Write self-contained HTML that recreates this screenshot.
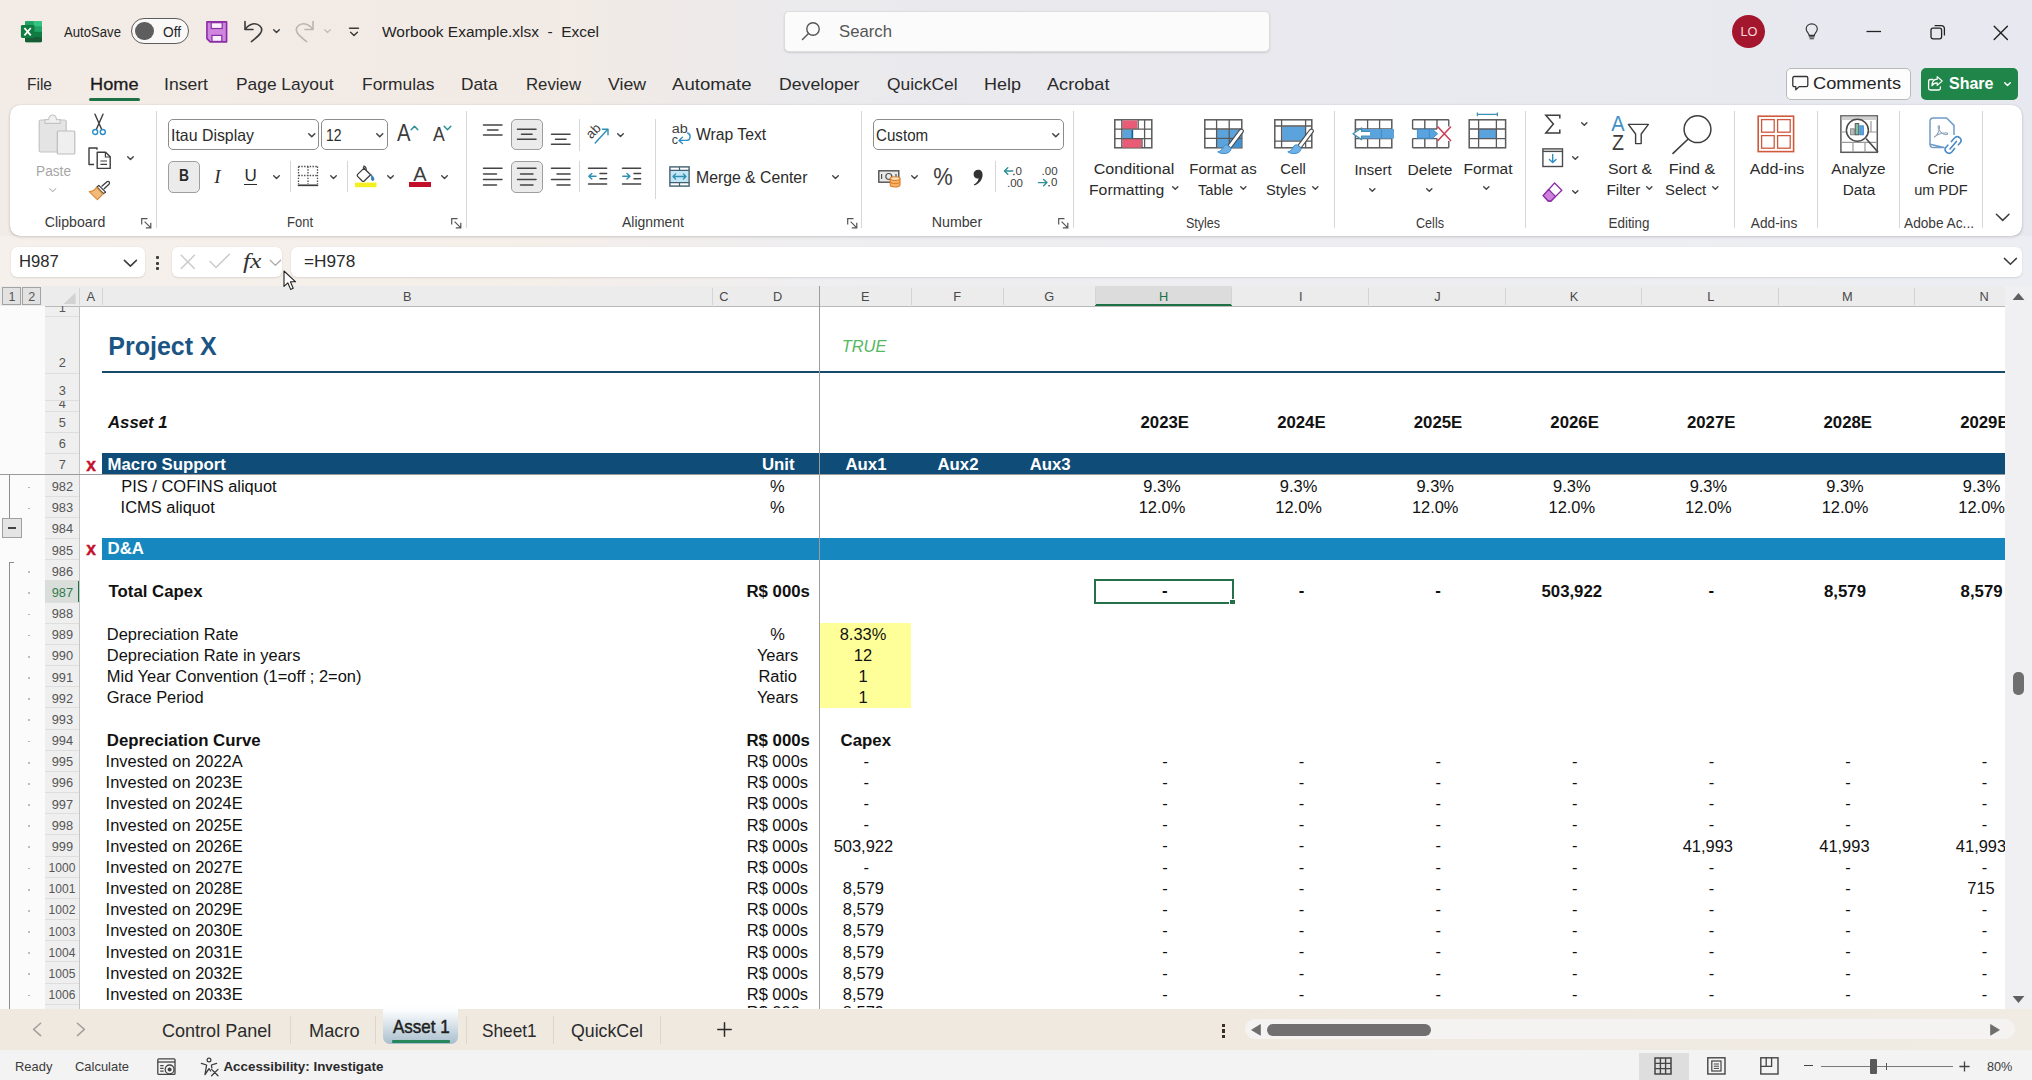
<!DOCTYPE html>
<html lang="en"><head><meta charset="utf-8"><title>Worbook Example.xlsx - Excel</title>
<style>
html,body{margin:0;padding:0}
body{width:2032px;height:1080px;position:relative;overflow:hidden;background:#f0ece8;font-family:"Liberation Sans", sans-serif;}
.a{position:absolute;box-sizing:border-box;display:block}
.t{position:absolute;white-space:nowrap;display:block}
svg{overflow:visible}
</style></head>
<body>
<div class="a" style="left:0px;top:0px;width:2032px;height:286px;background:linear-gradient(90deg,#f3ece6 0%,#f2ebe5 27%,#efeae8 33%,#ebeaec 39%,#e9e9ee 50%,#e8e9f0 100%);"></div>
<svg class="a" style="left:20px;top:21px;" width="23" height="22" viewBox="0 0 23 22"><rect x="5" y="0.2" width="17" height="21" rx="1.6" fill="#21a366"/>
<rect x="13.5" y="0.2" width="8.5" height="5.4" fill="#33c481"/><rect x="5" y="0.2" width="8.5" height="5.4" fill="#21a366"/>
<rect x="5" y="5.6" width="8.5" height="5.2" fill="#107c41"/><rect x="13.5" y="5.6" width="8.5" height="5.2" fill="#21a366"/>
<rect x="5" y="10.8" width="8.5" height="5.2" fill="#185c37"/><rect x="13.5" y="10.8" width="8.5" height="5.2" fill="#107c41"/>
<rect x="5" y="16" width="17" height="5.2" rx="1.2" fill="#185c37"/>
<rect x="0.9" y="4" width="13.6" height="13" rx="1.4" fill="#107c41"/>
<path d="M4.4 7 L10.8 14.4 M10.8 7 L4.4 14.4" stroke="#fff" stroke-width="1.8" stroke-linecap="butt"/></svg>
<span class="t" style="left:64.4px;top:23.00px;height:18px;line-height:18px;font-size:14px;color:#242424;transform-origin:left center;transform:scaleX(0.9388);">AutoSave</span>
<div class="a" style="left:131.3px;top:18px;width:57.5px;height:26.4px;background:#fbf9f8;border:1.5px solid #5c5c5c;border-radius:14px;"></div>
<div class="a" style="left:135.4px;top:22.1px;width:18.2px;height:18.2px;background:#5e5e5e;border-radius:10px;"></div>
<span class="t" style="left:162.7px;top:23.00px;height:18px;line-height:18px;font-size:14px;color:#242424;transform-origin:left center;transform:scaleX(0.9771);">Off</span>
<svg class="a" style="left:205.6px;top:20.8px;" width="22" height="22" viewBox="0 0 22 22"><path d="M0.9 0.9 H20.6 V20.9 H4.2 L0.9 17.6 Z" fill="#cf86de" stroke="#8a2da5" stroke-width="1.6" stroke-linejoin="round"/>
<rect x="5.2" y="1.7" width="11" height="5.8" fill="#fbf0fd" stroke="#8a2da5" stroke-width="1.2"/>
<rect x="6" y="14.4" width="9.8" height="6" fill="#fbf0fd" stroke="#8a2da5" stroke-width="1.2"/></svg>
<svg class="a" style="left:242px;top:19px;" width="23" height="24" viewBox="0 0 23 24"><path d="M3 2.5 V10.5 H11" fill="none" stroke="#3b3b3b" stroke-width="1.6" stroke-linecap="round" stroke-linejoin="round"/>
<path d="M3.4 10.2 C7 4.5 14 3 18 7 C22.4 11.5 18 16 9.4 22.6" fill="none" stroke="#3b3b3b" stroke-width="1.6" stroke-linecap="round"/></svg>
<svg class="a" style="left:271.9px;top:28.299999999999997px;" width="9" height="6.2" viewBox="0 0 9 6.2"><path d="M1.70 1.70 L4.50 4.50 L7.30 1.70" fill="none" stroke="#3b3b3b" stroke-width="1.4" stroke-linecap="round" stroke-linejoin="round"/></svg>
<svg class="a" style="left:293px;top:19px;" width="23" height="24" viewBox="0 0 23 24"><path d="M20 2.5 V10.5 H12" fill="none" stroke="#b9b5b2" stroke-width="1.6" stroke-linecap="round" stroke-linejoin="round"/>
<path d="M19.6 10.2 C16 4.5 9 3 5 7 C0.6 11.5 5 16 13.6 22.6" fill="none" stroke="#b9b5b2" stroke-width="1.6" stroke-linecap="round"/></svg>
<svg class="a" style="left:322.9px;top:28.299999999999997px;" width="9" height="6.2" viewBox="0 0 9 6.2"><path d="M1.70 1.70 L4.50 4.50 L7.30 1.70" fill="none" stroke="#c4c0bd" stroke-width="1.4" stroke-linecap="round" stroke-linejoin="round"/></svg>
<svg class="a" style="left:348px;top:26px;" width="12" height="12" viewBox="0 0 12 12"><path d="M1.5 2.2 H10.5" stroke="#3b3b3b" stroke-width="1.4" stroke-linecap="round"/><path d="M2.6 6.2 L6 9.6 L9.4 6.2" fill="none" stroke="#3b3b3b" stroke-width="1.4" stroke-linecap="round" stroke-linejoin="round"/></svg>
<span class="t" style="left:381.5px;top:22.20px;height:20px;line-height:20px;font-size:15.3px;color:#242424;transform-origin:left center;transform:scaleX(1.0103);white-space:pre;">Worbook Example.xlsx  -  Excel</span>
<div class="a" style="left:783.5px;top:10.9px;width:486px;height:41.6px;background:#fbfbfb;border:1px solid #dedddd;border-radius:5px;box-shadow:0 1px 2px rgba(0,0,0,.13);"></div>
<svg class="a" style="left:801px;top:21px;" width="20" height="20" viewBox="0 0 20 20"><circle cx="12" cy="8" r="6.2" fill="none" stroke="#555" stroke-width="1.4"/><path d="M7.5 12.5 L1.5 18.5" stroke="#555" stroke-width="1.5" stroke-linecap="round"/></svg>
<span class="t" style="left:838.5px;top:20.50px;height:22px;line-height:22px;font-size:17px;color:#555;transform-origin:left center;transform:scaleX(0.9838);">Search</span>
<div class="a" style="left:1732px;top:15.1px;width:33px;height:33px;background:#a4152e;border-radius:17px;"></div>
<span class="t" style="left:1748.5px;top:23.30px;height:17px;line-height:17px;font-size:13px;color:#f6dada;transform-origin:center center;transform:translateX(-50%) scaleX(0.9802);">LO</span>
<svg class="a" style="left:1804.5px;top:22.5px;" width="13.5" height="17" viewBox="0 0 15 19"><path d="M7.5 1 C3.8 1 1.3 3.6 1.3 6.8 C1.3 9 2.6 10.4 3.6 11.6 C4.2 12.3 4.5 13 4.5 13.8 H10.5 C10.5 13 10.8 12.3 11.4 11.6 C12.4 10.4 13.7 9 13.7 6.8 C13.7 3.6 11.2 1 7.5 1 Z" fill="none" stroke="#333" stroke-width="1.3"/><path d="M4.8 15.5 H10.2 M5.6 17.6 H9.4" stroke="#333" stroke-width="1.3" stroke-linecap="round"/></svg>
<svg class="a" style="left:1866px;top:30px;" width="16" height="3" viewBox="0 0 16 3"><path d="M0.5 1.5 H15" stroke="#222" stroke-width="1.3"/></svg>
<svg class="a" style="left:1930px;top:24px;" width="16" height="16" viewBox="0 0 16 16"><rect x="1" y="4.2" width="10.6" height="10.6" rx="2" fill="none" stroke="#222" stroke-width="1.3"/><path d="M4.6 1.6 H11.2 Q14.4 1.6 14.4 4.8 V11.4" fill="none" stroke="#222" stroke-width="1.3"/></svg>
<svg class="a" style="left:1993px;top:24.5px;" width="16" height="16" viewBox="0 0 16 16"><path d="M1.2 1.2 L14.4 14.4 M14.4 1.2 L1.2 14.4" stroke="#222" stroke-width="1.4" stroke-linecap="round"/></svg>
<span class="t" style="left:27px;top:73.90px;height:22px;line-height:22px;font-size:17px;color:#2a2a2a;transform-origin:left center;transform:scaleX(0.9122);">File</span>
<span class="t" style="left:89.5px;top:73.90px;height:22px;line-height:22px;font-size:17px;color:#1b1b1b;transform-origin:left center;transform:scaleX(1.0692);-webkit-text-stroke:0.3px #1b1b1b;">Home</span>
<span class="t" style="left:164px;top:73.90px;height:22px;line-height:22px;font-size:17px;color:#2a2a2a;transform-origin:left center;transform:scaleX(1.0345);">Insert</span>
<span class="t" style="left:236px;top:73.90px;height:22px;line-height:22px;font-size:17px;color:#2a2a2a;transform-origin:left center;transform:scaleX(1.0213);">Page Layout</span>
<span class="t" style="left:362px;top:73.90px;height:22px;line-height:22px;font-size:17px;color:#2a2a2a;transform-origin:left center;transform:scaleX(1.0232);">Formulas</span>
<span class="t" style="left:460.5px;top:73.90px;height:22px;line-height:22px;font-size:17px;color:#2a2a2a;transform-origin:left center;transform:scaleX(1.0161);">Data</span>
<span class="t" style="left:526px;top:73.90px;height:22px;line-height:22px;font-size:17px;color:#2a2a2a;transform-origin:left center;transform:scaleX(0.9865);">Review</span>
<span class="t" style="left:608px;top:73.90px;height:22px;line-height:22px;font-size:17px;color:#2a2a2a;transform-origin:left center;transform:scaleX(1.0398);">View</span>
<span class="t" style="left:672px;top:73.90px;height:22px;line-height:22px;font-size:17px;color:#2a2a2a;transform-origin:left center;transform:scaleX(1.0925);">Automate</span>
<span class="t" style="left:779px;top:73.90px;height:22px;line-height:22px;font-size:17px;color:#2a2a2a;transform-origin:left center;transform:scaleX(1.0387);">Developer</span>
<span class="t" style="left:887px;top:73.90px;height:22px;line-height:22px;font-size:17px;color:#2a2a2a;transform-origin:left center;transform:scaleX(1.0222);">QuickCel</span>
<span class="t" style="left:984px;top:73.90px;height:22px;line-height:22px;font-size:17px;color:#2a2a2a;transform-origin:left center;transform:scaleX(1.0581);">Help</span>
<span class="t" style="left:1047px;top:73.90px;height:22px;line-height:22px;font-size:17px;color:#2a2a2a;transform-origin:left center;transform:scaleX(1.0667);">Acrobat</span>
<div class="a" style="left:88.6px;top:97.6px;width:51.4px;height:3.2px;background:#1e7145;border-radius:2px;"></div>
<div class="a" style="left:1786px;top:68px;width:125px;height:31.5px;background:#fdfdfd;border:1px solid #b9b9b9;border-radius:5px;"></div>
<svg class="a" style="left:1792px;top:75px;" width="17" height="17" viewBox="0 0 17 17"><path d="M2.2 1.5 H14.4 Q15.8 1.5 15.8 2.9 V10.2 Q15.8 11.6 14.4 11.6 H7.2 L3.8 14.8 V11.6 H2.2 Q0.8 11.6 0.8 10.2 V2.9 Q0.8 1.5 2.2 1.5 Z" fill="none" stroke="#333" stroke-width="1.3" stroke-linejoin="round"/></svg>
<span class="t" style="left:1813px;top:73.30px;height:21px;line-height:21px;font-size:16.5px;color:#242424;transform-origin:left center;transform:scaleX(1.1030);">Comments</span>
<div class="a" style="left:1921px;top:68px;width:96.5px;height:31.5px;background:#1f8548;border-radius:5px;"></div>
<svg class="a" style="left:1927px;top:75px;" width="17" height="17" viewBox="0 0 17 17"><path d="M6 4.5 H3.4 Q1.6 4.5 1.6 6.3 V13.2 Q1.6 15 3.4 15 H11.6 Q13.4 15 13.4 13.2 V11.8" fill="none" stroke="#fff" stroke-width="1.3" stroke-linecap="round"/><path d="M10.2 1.6 L15.2 6 L10.2 10.4 V7.8 C7.6 7.8 6 8.8 5 10.8 C5 7 7 4.4 10.2 4.2 Z" fill="none" stroke="#fff" stroke-width="1.2" stroke-linejoin="round"/></svg>
<span class="t" style="left:1949px;top:73.30px;height:21px;line-height:21px;font-size:16.5px;color:#ffffff;font-weight:700;transform-origin:left center;transform:scaleX(0.9704);">Share</span>
<svg class="a" style="left:2003.0px;top:81.375px;" width="9" height="6.25" viewBox="0 0 9 6.25"><path d="M1.75 1.75 L4.50 4.50 L7.25 1.75" fill="none" stroke="#fff" stroke-width="1.5" stroke-linecap="round" stroke-linejoin="round"/></svg>
<div class="a" style="left:10px;top:105px;width:2012px;height:130.5px;background:#ffffff;border-radius:10px;box-shadow:0 1px 3px rgba(0,0,0,.22),0 0 1px rgba(0,0,0,.15);"></div>
<svg class="a" style="left:38px;top:114px;" width="38" height="41" viewBox="0 0 38 41"><rect x="1.2" y="6" width="27" height="32" rx="1.5" fill="#e4e4e4" stroke="#c4c4c4" stroke-width="1.2"/>
<path d="M7 9.4 V5.6 H10.6 Q11.2 1 14.6 1 Q18 1 18.6 5.6 H22.2 V9.4 Z" fill="#f0f0f0" stroke="#c4c4c4" stroke-width="1.1"/>
<rect x="19.3" y="17" width="17.5" height="23" rx="1" fill="#efefef" stroke="#bdbdbd" stroke-width="1.2"/></svg>
<span class="t" style="left:35.8px;top:160.60px;height:20px;line-height:20px;font-size:15.2px;color:#a6a6a6;transform-origin:left center;transform:scaleX(0.9010);">Paste</span>
<svg class="a" style="left:48.099999999999994px;top:186.54999999999998px;" width="9.4" height="6.3" viewBox="0 0 9.4 6.3"><path d="M1.60 1.60 L4.70 4.70 L7.80 1.60" fill="none" stroke="#bdbdbd" stroke-width="1.2" stroke-linecap="round" stroke-linejoin="round"/></svg>
<svg class="a" style="left:91px;top:113px;" width="16" height="23" viewBox="0 0 16 23"><path d="M4 1.2 L10.6 16.2 M12 1.2 L5.4 16.2" stroke="#3d3d3d" stroke-width="1.4" stroke-linecap="round"/>
<circle cx="4.2" cy="19" r="2.5" fill="none" stroke="#2f8fc4" stroke-width="1.4"/><circle cx="11.8" cy="19" r="2.5" fill="none" stroke="#2f8fc4" stroke-width="1.4"/></svg>
<svg class="a" style="left:87.5px;top:146.5px;" width="24" height="23" viewBox="0 0 24 23"><path d="M9 2.8 V1 H1 V17.5 H6" fill="none" stroke="#3d3d3d" stroke-width="1.4" stroke-linejoin="round"/>
<path d="M9.2 5.2 H17.6 L22.2 9.8 V21.4 H9.2 Z" fill="#fff" stroke="#3d3d3d" stroke-width="1.4" stroke-linejoin="round"/>
<path d="M17.4 5.4 V10 H22" fill="none" stroke="#3d3d3d" stroke-width="1.2"/>
<path d="M12.4 14 H19 M12.4 17.4 H19" stroke="#3d3d3d" stroke-width="1.2"/></svg>
<svg class="a" style="left:125.9px;top:155.1px;" width="9" height="6.2" viewBox="0 0 9 6.2"><path d="M1.70 1.70 L4.50 4.50 L7.30 1.70" fill="none" stroke="#444" stroke-width="1.4" stroke-linecap="round" stroke-linejoin="round"/></svg>
<svg class="a" style="left:88px;top:180px;" width="23" height="21" viewBox="0 0 23 21"><path d="M13.5 6.5 L19 1.8 Q20.3 0.9 21.2 2 Q22 3.2 21 4.2 L15.8 9" fill="#fff" stroke="#3d3d3d" stroke-width="1.3" stroke-linejoin="round"/>
<path d="M10.8 5.4 L17.6 12.2 L15.4 13.6 L9 7 Z" fill="#fff" stroke="#3d3d3d" stroke-width="1.2" stroke-linejoin="round"/>
<path d="M8.6 7.4 L14.8 14 L9.4 19.6 L1.2 11.6 C4.5 11.6 6.8 10 8.6 7.4 Z" fill="#f1bb7c" stroke="#d98a3a" stroke-width="1.2" stroke-linejoin="round"/></svg>
<span class="t" style="left:74.5px;top:213.30px;height:19px;line-height:19px;font-size:14.3px;color:#3a3a3a;transform-origin:center center;transform:translateX(-50%) scaleX(0.9885);">Clipboard</span>
<svg class="a" style="left:141px;top:217.5px;" width="11" height="11" viewBox="0 0 11 11"><path d="M0.7 6.5 V0.7 H6.5" fill="none" stroke="#555" stroke-width="1.2"/><path d="M3.6 3.6 L9.6 9.6 M9.8 4.8 V9.8 H4.8" fill="none" stroke="#555" stroke-width="1.2"/></svg>
<div class="a" style="left:156.1px;top:111px;width:1px;height:117px;background:#d6d6d6;"></div>
<div class="a" style="left:168px;top:118.7px;width:151px;height:31.5px;background:#fff;border:1px solid #8c8c8c;border-radius:5px;"></div>
<span class="t" style="left:171px;top:124.80px;height:21px;line-height:21px;font-size:16.5px;color:#2b2b2b;transform-origin:left center;transform:scaleX(0.9627);">Itau Display</span>
<svg class="a" style="left:306.75px;top:131.75px;" width="9.5" height="6.5" viewBox="0 0 9.5 6.5"><path d="M1.75 1.75 L4.75 4.75 L7.75 1.75" fill="none" stroke="#444" stroke-width="1.5" stroke-linecap="round" stroke-linejoin="round"/></svg>
<div class="a" style="left:321px;top:118.7px;width:66.5px;height:31.5px;background:#fff;border:1px solid #8c8c8c;border-radius:5px;"></div>
<span class="t" style="left:326px;top:124.80px;height:21px;line-height:21px;font-size:16.5px;color:#2b2b2b;transform-origin:left center;transform:scaleX(0.8443);">12</span>
<svg class="a" style="left:375.25px;top:131.75px;" width="9.5" height="6.5" viewBox="0 0 9.5 6.5"><path d="M1.75 1.75 L4.75 4.75 L7.75 1.75" fill="none" stroke="#444" stroke-width="1.5" stroke-linecap="round" stroke-linejoin="round"/></svg>
<span class="t" style="left:397px;top:120.50px;height:24px;line-height:24px;font-size:23px;color:#3d3d3d;transform-origin:left center;transform:scaleX(0.8798);">A</span>
<svg class="a" style="left:409.5px;top:124.5px;" width="9" height="6" viewBox="0 0 9 6"><path d="M1.2 4.8 L4.5 1.3 L7.8 4.8" fill="none" stroke="#2e8f95" stroke-width="1.5" stroke-linecap="round" stroke-linejoin="round"/></svg>
<span class="t" style="left:433px;top:122.80px;height:22px;line-height:22px;font-size:19.5px;color:#3d3d3d;transform-origin:left center;transform:scaleX(0.9066);">A</span>
<svg class="a" style="left:443.3px;top:124.5px;" width="9" height="6" viewBox="0 0 9 6"><path d="M1.2 1.2 L4.5 4.7 L7.8 1.2" fill="none" stroke="#2e8f95" stroke-width="1.5" stroke-linecap="round" stroke-linejoin="round"/></svg>
<div class="a" style="left:168px;top:161px;width:32px;height:31.5px;background:#ebebeb;border:1px solid #9e9e9e;border-radius:5px;"></div>
<span class="t" style="left:184px;top:164.90px;height:22px;line-height:22px;font-size:17px;color:#2b2b2b;font-weight:700;transform-origin:center center;transform:translateX(-50%) scaleX(0.8142);">B</span>
<span class="t" style="left:217.3px;top:163.70px;height:25px;line-height:25px;font-size:19px;color:#2b2b2b;font-style:italic;font-family:'Liberation Serif',serif;transform-origin:center center;transform:translateX(-50%);">I</span>
<span class="t" style="left:250.7px;top:165.00px;height:22px;line-height:22px;font-size:17px;color:#2b2b2b;transform-origin:center center;transform:translateX(-50%);">U</span>
<div class="a" style="left:244.3px;top:183.6px;width:13px;height:1.5px;background:#2b2b2b;"></div>
<svg class="a" style="left:272.0px;top:174.1px;" width="9" height="6.2" viewBox="0 0 9 6.2"><path d="M1.70 1.70 L4.50 4.50 L7.30 1.70" fill="none" stroke="#444" stroke-width="1.4" stroke-linecap="round" stroke-linejoin="round"/></svg>
<div class="a" style="left:290.1px;top:161px;width:1px;height:31px;background:#d6d6d6;"></div>
<svg class="a" style="left:297px;top:165px;" width="22" height="22" viewBox="0 0 22 22"><path d="M1.5 1.5 H20.5 M1.5 1.5 V19 M20.5 1.5 V19 M11 1.5 V19 M1.5 10.5 H20.5" fill="none" stroke="#4a4a4a" stroke-width="1.3" stroke-dasharray="1.4 1.4"/>
<path d="M0.8 20.3 H21.2" stroke="#3d3d3d" stroke-width="1.7"/></svg>
<svg class="a" style="left:329.0px;top:174.1px;" width="9" height="6.2" viewBox="0 0 9 6.2"><path d="M1.70 1.70 L4.50 4.50 L7.30 1.70" fill="none" stroke="#444" stroke-width="1.4" stroke-linecap="round" stroke-linejoin="round"/></svg>
<div class="a" style="left:346.6px;top:161px;width:1px;height:31px;background:#d6d6d6;"></div>
<svg class="a" style="left:355px;top:165px;" width="22" height="23" viewBox="0 0 22 23"><path d="M8 2.2 L15.6 9.8 L9.2 16 Q8.2 16.8 7.2 16 L2.6 11.4 Q1.8 10.4 2.6 9.4 L9.6 2.6" fill="#fff" stroke="#3d3d3d" stroke-width="1.3" stroke-linejoin="round"/>
<path d="M8.2 1.2 C10.5 1.2 11.4 3 11.2 5" fill="none" stroke="#3d3d3d" stroke-width="1.2"/>
<path d="M15.8 9.2 C17.6 10.6 19 12.6 19 14.4 C19 15.8 16.4 15.8 16.4 14.4 C16.4 13 16.6 11.4 15.8 9.2 Z" fill="#2c79b3" stroke="#2c79b3" stroke-width="0.6"/>
<rect x="0" y="17.6" width="21.5" height="4.6" fill="#f4f01f"/></svg>
<svg class="a" style="left:385.9px;top:174.1px;" width="9" height="6.2" viewBox="0 0 9 6.2"><path d="M1.70 1.70 L4.50 4.50 L7.30 1.70" fill="none" stroke="#444" stroke-width="1.4" stroke-linecap="round" stroke-linejoin="round"/></svg>
<span class="t" style="left:420.3px;top:163.30px;height:22px;line-height:22px;font-size:20.5px;color:#3d3d3d;transform-origin:center center;transform:translateX(-50%) scaleX(0.9790);">A</span>
<div class="a" style="left:409px;top:182.4px;width:22.2px;height:4.8px;background:#c40f2b;"></div>
<svg class="a" style="left:439.9px;top:174.1px;" width="9" height="6.2" viewBox="0 0 9 6.2"><path d="M1.70 1.70 L4.50 4.50 L7.30 1.70" fill="none" stroke="#444" stroke-width="1.4" stroke-linecap="round" stroke-linejoin="round"/></svg>
<span class="t" style="left:300px;top:213.30px;height:19px;line-height:19px;font-size:14.3px;color:#3a3a3a;transform-origin:center center;transform:translateX(-50%) scaleX(0.9088);">Font</span>
<svg class="a" style="left:450.5px;top:217.5px;" width="11" height="11" viewBox="0 0 11 11"><path d="M0.7 6.5 V0.7 H6.5" fill="none" stroke="#555" stroke-width="1.2"/><path d="M3.6 3.6 L9.6 9.6 M9.8 4.8 V9.8 H4.8" fill="none" stroke="#555" stroke-width="1.2"/></svg>
<div class="a" style="left:465.6px;top:111px;width:1px;height:117px;background:#d6d6d6;"></div>
<svg class="a" style="left:482px;top:119px;" width="22" height="30" viewBox="0 0 22 30"><path d="M1.5 6 H20" stroke="#444" stroke-width="1.5" stroke-linecap="round"/><path d="M5.5 11 H16" stroke="#444" stroke-width="1.5" stroke-linecap="round"/><path d="M1.5 16 H20" stroke="#444" stroke-width="1.5" stroke-linecap="round"/></svg>
<div class="a" style="left:511px;top:118.7px;width:32px;height:31.5px;background:#ebebeb;border:1px solid #9e9e9e;border-radius:5px;"></div>
<svg class="a" style="left:516px;top:119px;" width="22" height="30" viewBox="0 0 22 30"><path d="M1.5 10.2 H20" stroke="#444" stroke-width="1.5" stroke-linecap="round"/><path d="M5.5 15.2 H16" stroke="#444" stroke-width="1.5" stroke-linecap="round"/><path d="M1.5 20.2 H20" stroke="#444" stroke-width="1.5" stroke-linecap="round"/></svg>
<svg class="a" style="left:550px;top:119px;" width="22" height="30" viewBox="0 0 22 30"><path d="M1.5 15.2 H20" stroke="#444" stroke-width="1.5" stroke-linecap="round"/><path d="M5.5 20.2 H16" stroke="#444" stroke-width="1.5" stroke-linecap="round"/><path d="M1.5 25.2 H20" stroke="#444" stroke-width="1.5" stroke-linecap="round"/></svg>
<div class="a" style="left:578.6px;top:119px;width:1px;height:32px;background:#d6d6d6;"></div>
<svg class="a" style="left:586px;top:122px;" width="24" height="23" viewBox="0 0 24 23"><text x="0" y="0" font-family="Liberation Sans, sans-serif" font-size="13.4" fill="#3d3d3d" transform="translate(5.3,17.6) rotate(-46)">ab</text>
<path d="M9.2 21 L21.6 7.6" stroke="#2f8fb5" stroke-width="1.4" stroke-linecap="round"/><path d="M16.4 7.2 L22 7.2 L22 12.8" fill="none" stroke="#2f8fb5" stroke-width="1.4" stroke-linecap="round" stroke-linejoin="round"/></svg>
<svg class="a" style="left:616.0px;top:131.9px;" width="9" height="6.2" viewBox="0 0 9 6.2"><path d="M1.70 1.70 L4.50 4.50 L7.30 1.70" fill="none" stroke="#444" stroke-width="1.4" stroke-linecap="round" stroke-linejoin="round"/></svg>
<svg class="a" style="left:482px;top:165px;" width="22" height="23" viewBox="0 0 22 23"><path d="M1.5 3.2 H20" stroke="#444" stroke-width="1.5" stroke-linecap="round"/><path d="M1.5 8.9 H14.5" stroke="#444" stroke-width="1.5" stroke-linecap="round"/><path d="M1.5 14.5 H20" stroke="#444" stroke-width="1.5" stroke-linecap="round"/><path d="M1.5 20.1 H14.5" stroke="#444" stroke-width="1.5" stroke-linecap="round"/></svg>
<div class="a" style="left:511px;top:161px;width:32px;height:31.5px;background:#ebebeb;border:1px solid #9e9e9e;border-radius:5px;"></div>
<svg class="a" style="left:516px;top:165px;" width="22" height="23" viewBox="0 0 22 23"><path d="M1.5 3.2 H20" stroke="#444" stroke-width="1.5" stroke-linecap="round"/><path d="M4.5 8.9 H17" stroke="#444" stroke-width="1.5" stroke-linecap="round"/><path d="M1.5 14.5 H20" stroke="#444" stroke-width="1.5" stroke-linecap="round"/><path d="M4.5 20.1 H17" stroke="#444" stroke-width="1.5" stroke-linecap="round"/></svg>
<svg class="a" style="left:550px;top:165px;" width="22" height="23" viewBox="0 0 22 23"><path d="M1.5 3.2 H20" stroke="#444" stroke-width="1.5" stroke-linecap="round"/><path d="M7 8.9 H20" stroke="#444" stroke-width="1.5" stroke-linecap="round"/><path d="M1.5 14.5 H20" stroke="#444" stroke-width="1.5" stroke-linecap="round"/><path d="M7 20.1 H20" stroke="#444" stroke-width="1.5" stroke-linecap="round"/></svg>
<div class="a" style="left:578.6px;top:161px;width:1px;height:31px;background:#d6d6d6;"></div>
<svg class="a" style="left:587px;top:165px;" width="22" height="23" viewBox="0 0 22 23"><path d="M1.5 3.2 H19.6" stroke="#444" stroke-width="1.5" stroke-linecap="round"/><path d="M13 8.5 H19.6" stroke="#444" stroke-width="1.5" stroke-linecap="round"/><path d="M13 13.8 H19.6" stroke="#444" stroke-width="1.5" stroke-linecap="round"/><path d="M1.5 19.1 H19.6" stroke="#444" stroke-width="1.5" stroke-linecap="round"/><path d="M9 11.2 H2 M4.8 8.4 L1.8 11.2 L4.8 14" fill="none" stroke="#2f8fb5" stroke-width="1.4" stroke-linecap="round" stroke-linejoin="round"/></svg>
<svg class="a" style="left:621px;top:165px;" width="22" height="23" viewBox="0 0 22 23"><path d="M1.5 3.2 H19.6" stroke="#444" stroke-width="1.5" stroke-linecap="round"/><path d="M13 8.5 H19.6" stroke="#444" stroke-width="1.5" stroke-linecap="round"/><path d="M13 13.8 H19.6" stroke="#444" stroke-width="1.5" stroke-linecap="round"/><path d="M1.5 19.1 H19.6" stroke="#444" stroke-width="1.5" stroke-linecap="round"/><path d="M1.8 11.2 H8.8 M6 8.4 L9 11.2 L6 14" fill="none" stroke="#2f8fb5" stroke-width="1.4" stroke-linecap="round" stroke-linejoin="round"/></svg>
<div class="a" style="left:654.6px;top:119px;width:1px;height:80px;background:#d6d6d6;"></div>
<svg class="a" style="left:670px;top:124px;" width="22" height="22" viewBox="0 0 22 22"><text x="1.8" y="9.4" font-family="Liberation Sans, sans-serif" font-size="12.5" fill="#3d3d3d" textLength="16" lengthAdjust="spacingAndGlyphs">ab</text>
<text x="1.8" y="19.6" font-family="Liberation Sans, sans-serif" font-size="12.5" fill="#3d3d3d">c</text>
<path d="M17.6 9 C21.4 10 20.8 16.4 16.4 16.4 H9.4 M12.4 13.2 L9 16.4 L12.4 19.6" fill="none" stroke="#2f8fc4" stroke-width="1.4" stroke-linecap="round" stroke-linejoin="round"/></svg>
<span class="t" style="left:695.6px;top:125.20px;height:20px;line-height:20px;font-size:15.6px;color:#2b2b2b;transform-origin:left center;transform:scaleX(1.0083);">Wrap Text</span>
<svg class="a" style="left:668.5px;top:165.5px;" width="21" height="21" viewBox="0 0 21 21"><rect x="1.4" y="4.6" width="18.2" height="11.8" fill="#c3e6f6"/>
<rect x="0.9" y="0.9" width="19.2" height="19.2" fill="none" stroke="#44606f" stroke-width="1.4"/>
<path d="M0.9 4.4 H20.1 M0.9 16.6 H20.1 M10.5 0.9 V4.4 M10.5 16.6 V20.1" stroke="#44606f" stroke-width="1.2" fill="none"/>
<path d="M4.2 10.5 H16.8 M6.6 8 L4 10.5 L6.6 13 M14.4 8 L17 10.5 L14.4 13" fill="none" stroke="#2f8fb5" stroke-width="1.3" stroke-linecap="round" stroke-linejoin="round"/></svg>
<span class="t" style="left:695.6px;top:167.60px;height:20px;line-height:20px;font-size:15.6px;color:#2b2b2b;transform-origin:left center;transform:scaleX(1.0120);">Merge &amp; Center</span>
<svg class="a" style="left:831.0px;top:174.1px;" width="9" height="6.2" viewBox="0 0 9 6.2"><path d="M1.70 1.70 L4.50 4.50 L7.30 1.70" fill="none" stroke="#444" stroke-width="1.4" stroke-linecap="round" stroke-linejoin="round"/></svg>
<span class="t" style="left:652.5px;top:213.30px;height:19px;line-height:19px;font-size:14.3px;color:#3a3a3a;transform-origin:center center;transform:translateX(-50%) scaleX(0.9752);">Alignment</span>
<svg class="a" style="left:847px;top:217.5px;" width="11" height="11" viewBox="0 0 11 11"><path d="M0.7 6.5 V0.7 H6.5" fill="none" stroke="#555" stroke-width="1.2"/><path d="M3.6 3.6 L9.6 9.6 M9.8 4.8 V9.8 H4.8" fill="none" stroke="#555" stroke-width="1.2"/></svg>
<div class="a" style="left:861.1px;top:111px;width:1px;height:117px;background:#d6d6d6;"></div>
<div class="a" style="left:873px;top:118.7px;width:190.5px;height:31.5px;background:#fff;border:1px solid #8c8c8c;border-radius:5px;"></div>
<span class="t" style="left:876.4px;top:124.80px;height:21px;line-height:21px;font-size:16.5px;color:#2b2b2b;transform-origin:left center;transform:scaleX(0.9181);">Custom</span>
<svg class="a" style="left:1050.55px;top:131.75px;" width="9.5" height="6.5" viewBox="0 0 9.5 6.5"><path d="M1.75 1.75 L4.75 4.75 L7.75 1.75" fill="none" stroke="#444" stroke-width="1.5" stroke-linecap="round" stroke-linejoin="round"/></svg>
<svg class="a" style="left:877.5px;top:169.5px;" width="23" height="18" viewBox="0 0 23 18"><rect x="0.8" y="0.8" width="20" height="11.4" fill="#e9e9e9" stroke="#4f4f4f" stroke-width="1.4"/>
<circle cx="10.8" cy="6.5" r="3" fill="none" stroke="#4f4f4f" stroke-width="1.2"/><path d="M3.6 4 V9 M18 4 V9" stroke="#4f4f4f" stroke-width="1.2"/>
<path d="M12.2 8.6 V15 C12.2 17.6 22 17.6 22 15 V8.6 Z" fill="#f5b36b" stroke="#e07b1f" stroke-width="1.1"/>
<ellipse cx="17.1" cy="8.6" rx="4.9" ry="1.9" fill="#fde2bf" stroke="#e07b1f" stroke-width="1.1"/>
<path d="M12.2 11.8 C12.2 14.2 22 14.2 22 11.8" fill="none" stroke="#e07b1f" stroke-width="1"/></svg>
<svg class="a" style="left:909.5px;top:174.1px;" width="9" height="6.2" viewBox="0 0 9 6.2"><path d="M1.70 1.70 L4.50 4.50 L7.30 1.70" fill="none" stroke="#444" stroke-width="1.4" stroke-linecap="round" stroke-linejoin="round"/></svg>
<span class="t" style="left:942.5px;top:165.00px;height:24px;line-height:24px;font-size:23px;color:#3d3d3d;transform-origin:center center;transform:translateX(-50%) scaleX(0.9534);">%</span>
<svg class="a" style="left:971.5px;top:168.5px;" width="12" height="18" viewBox="0 0 12 18"><path d="M6.2 0.8 C9.2 0.8 10.6 3 10.6 5.8 C10.6 10.4 7.4 14.6 2.4 16.6 L1.8 15.4 C4.8 13.8 6.4 11.6 6.6 9.2 C6.4 9.3 6 9.4 5.6 9.4 C3.2 9.4 1.6 7.6 1.6 5.2 C1.6 2.6 3.6 0.8 6.2 0.8 Z" fill="#333"/></svg>
<div class="a" style="left:994.8000000000001px;top:161px;width:1px;height:31px;background:#d6d6d6;"></div>
<svg class="a" style="left:1003px;top:166px;" width="22" height="22" viewBox="0 0 22 22"><path d="M9.8 5 H1.6 M4.8 1.8 L1.4 5 L4.8 8.2" fill="none" stroke="#2e8f95" stroke-width="1.4" stroke-linecap="round" stroke-linejoin="round"/>
<text x="12.6" y="9.2" font-family="Liberation Sans, sans-serif" font-size="11.5" fill="#3d3d3d">0</text>
<rect x="10.2" y="7.8" width="1.4" height="1.4" fill="#3d3d3d"/>
<text x="4" y="20.6" font-family="Liberation Sans, sans-serif" font-size="11.5" fill="#3d3d3d" textLength="16">.00</text></svg>
<svg class="a" style="left:1036.5px;top:166px;" width="22" height="22" viewBox="0 0 22 22"><text x="4.6" y="9.4" font-family="Liberation Sans, sans-serif" font-size="11.5" fill="#3d3d3d" textLength="16">.00</text>
<path d="M1.4 16.6 H9.8 M6.6 13.4 L10 16.6 L6.6 19.8" fill="none" stroke="#2e8f95" stroke-width="1.4" stroke-linecap="round" stroke-linejoin="round"/>
<rect x="11.4" y="19" width="1.4" height="1.4" fill="#3d3d3d"/>
<text x="14" y="20.4" font-family="Liberation Sans, sans-serif" font-size="11.5" fill="#3d3d3d">0</text></svg>
<span class="t" style="left:956.5px;top:213.30px;height:19px;line-height:19px;font-size:14.3px;color:#3a3a3a;transform-origin:center center;transform:translateX(-50%) scaleX(0.9929);">Number</span>
<svg class="a" style="left:1057.8px;top:217.5px;" width="11" height="11" viewBox="0 0 11 11"><path d="M0.7 6.5 V0.7 H6.5" fill="none" stroke="#555" stroke-width="1.2"/><path d="M3.6 3.6 L9.6 9.6 M9.8 4.8 V9.8 H4.8" fill="none" stroke="#555" stroke-width="1.2"/></svg>
<div class="a" style="left:1073.1px;top:111px;width:1px;height:117px;background:#d6d6d6;"></div>
<svg class="a" style="left:1114px;top:118.5px;" width="39" height="30" viewBox="0 0 39 30"><rect x="0.8" y="0.8" width="37" height="28" fill="#fff" stroke="#5a5a5a" stroke-width="1.5"/>
<rect x="8.4" y="1.5" width="15" height="8.4" fill="#ea5b75"/><rect x="8.4" y="20" width="19" height="8.6" fill="#ea5b75"/>
<rect x="8.4" y="10.8" width="9.6" height="8.4" fill="#5ba3dc"/><rect x="17.6" y="10.8" width="1.6" height="8.4" fill="#1d5e8e"/>
<rect x="23.6" y="1.5" width="1.4" height="8.4" fill="#fff"/>
<path d="M7.8 0.8 V28.8 M30.6 0.8 V28.8 M0.8 10.2 H38 M0.8 19.6 H38 M24.2 0.8 V10.2 M28 19.6 V28.8" stroke="#5a5a5a" stroke-width="1.3" fill="none"/></svg>
<span class="t" style="left:1133.7px;top:158.60px;height:20px;line-height:20px;font-size:15.3px;color:#2b2b2b;transform-origin:center center;transform:translateX(-50%) scaleX(1.0529);">Conditional</span>
<span class="t" style="left:1088.7px;top:179.60px;height:20px;line-height:20px;font-size:15.3px;color:#2b2b2b;transform-origin:left center;transform:scaleX(1.0300);">Formatting</span>
<svg class="a" style="left:1170.7px;top:185.3px;" width="8.6" height="6.0" viewBox="0 0 8.6 6.0"><path d="M1.70 1.70 L4.30 4.30 L6.90 1.70" fill="none" stroke="#444" stroke-width="1.4" stroke-linecap="round" stroke-linejoin="round"/></svg>
<svg class="a" style="left:1203.5px;top:118.5px;" width="42" height="37" viewBox="0 0 42 37"><rect x="0.8" y="0.8" width="37" height="28" fill="#fff" stroke="#5a5a5a" stroke-width="1.5"/>
<rect x="13" y="10.4" width="24.4" height="18" fill="#5ba3dc"/>
<rect x="25.4" y="19.6" width="12" height="8.8" fill="#4192d3"/>
<path d="M12.6 0.8 V28.8 M25.2 0.8 V28.8 M0.8 10 H38 M0.8 19.4 H38" stroke="#5a5a5a" stroke-width="1.3" fill="none"/><g transform="translate(13.4,9.6)"><path d="M24.6 0.6 Q26.8 1.4 25.6 3.6 L13.6 19.4 L10.4 17 L22.2 1.4 Q23.4 0 24.6 0.6 Z" fill="#fff" stroke="#4a4a4a" stroke-width="1.2" stroke-linejoin="round"/>
<path d="M10.2 16.6 L13.8 19.6 C13.4 23.6 9.4 26 3.4 24.6 C1.4 24.2 0.4 23.6 0.4 23.2 C3.6 22.6 5 20.6 5.8 18.6 C6.6 16.8 8.6 15.6 10.2 16.6 Z" fill="#6fb1e4" stroke="#3f8fd0" stroke-width="1"/></g></svg>
<span class="t" style="left:1223.2px;top:158.60px;height:20px;line-height:20px;font-size:15.3px;color:#2b2b2b;transform-origin:center center;transform:translateX(-50%) scaleX(0.9774);">Format as</span>
<span class="t" style="left:1198.3px;top:179.60px;height:20px;line-height:20px;font-size:15.3px;color:#2b2b2b;transform-origin:left center;transform:scaleX(0.9623);">Table</span>
<svg class="a" style="left:1238.6000000000001px;top:185.3px;" width="8.6" height="6.0" viewBox="0 0 8.6 6.0"><path d="M1.70 1.70 L4.30 4.30 L6.90 1.70" fill="none" stroke="#444" stroke-width="1.4" stroke-linecap="round" stroke-linejoin="round"/></svg>
<svg class="a" style="left:1274.2px;top:118.5px;" width="42" height="37" viewBox="0 0 42 37"><rect x="0.8" y="0.8" width="37" height="28" fill="#fff" stroke="#5a5a5a" stroke-width="1.5"/>
<rect x="8.2" y="7.4" width="23" height="14.4" fill="#5ba3dc"/>
<path d="M7.6 0.8 V28.8 M31.6 0.8 V28.8 M0.8 7 H38 M0.8 22.2 H38" stroke="#5a5a5a" stroke-width="1.3" fill="none"/><g transform="translate(13.4,9.6)"><path d="M24.6 0.6 Q26.8 1.4 25.6 3.6 L13.6 19.4 L10.4 17 L22.2 1.4 Q23.4 0 24.6 0.6 Z" fill="#fff" stroke="#4a4a4a" stroke-width="1.2" stroke-linejoin="round"/>
<path d="M10.2 16.6 L13.8 19.6 C13.4 23.6 9.4 26 3.4 24.6 C1.4 24.2 0.4 23.6 0.4 23.2 C3.6 22.6 5 20.6 5.8 18.6 C6.6 16.8 8.6 15.6 10.2 16.6 Z" fill="#6fb1e4" stroke="#3f8fd0" stroke-width="1"/></g></svg>
<span class="t" style="left:1292.7px;top:158.60px;height:20px;line-height:20px;font-size:15.3px;color:#2b2b2b;transform-origin:center center;transform:translateX(-50%) scaleX(0.9636);">Cell</span>
<span class="t" style="left:1266.4px;top:179.60px;height:20px;line-height:20px;font-size:15.3px;color:#2b2b2b;transform-origin:left center;transform:scaleX(0.9602);">Styles</span>
<svg class="a" style="left:1311.4px;top:185.3px;" width="8.6" height="6.0" viewBox="0 0 8.6 6.0"><path d="M1.70 1.70 L4.30 4.30 L6.90 1.70" fill="none" stroke="#444" stroke-width="1.4" stroke-linecap="round" stroke-linejoin="round"/></svg>
<span class="t" style="left:1202.5px;top:213.50px;height:19px;line-height:19px;font-size:14.3px;color:#3a3a3a;transform-origin:center center;transform:translateX(-50%) scaleX(0.8783);">Styles</span>
<div class="a" style="left:1334.1px;top:111px;width:1px;height:117px;background:#d6d6d6;"></div>
<svg class="a" style="left:1352px;top:118.5px;" width="43" height="30" viewBox="0 0 43 30"><rect x="3.4" y="0.8" width="36.4" height="28" fill="#fff" stroke="#5a5a5a" stroke-width="1.5"/>
<path d="M15.6 0.8 V28.8 M27.6 0.8 V28.8 M3.4 10 H39.8 M3.4 19.6 H39.8" stroke="#5a5a5a" stroke-width="1.3" fill="none"/>
<rect x="10" y="10" width="32" height="9.6" fill="#5ba3dc"/><path d="M29.4 10 V19.6" stroke="#3f8fd0" stroke-width="1.2"/>
<path d="M18 12.4 H9.6 V9 L1 14.8 L9.6 20.6 V17.2 H18" fill="#fff" stroke="#3f8fb5" stroke-width="1.3" stroke-linejoin="round"/></svg>
<span class="t" style="left:1373.1px;top:160.00px;height:20px;line-height:20px;font-size:15.3px;color:#2b2b2b;transform-origin:center center;transform:translateX(-50%) scaleX(0.9669);">Insert</span>
<svg class="a" style="left:1367.9px;top:186.8px;" width="8.6" height="6.0" viewBox="0 0 8.6 6.0"><path d="M1.70 1.70 L4.30 4.30 L6.90 1.70" fill="none" stroke="#444" stroke-width="1.4" stroke-linecap="round" stroke-linejoin="round"/></svg>
<svg class="a" style="left:1410.5px;top:118.5px;" width="42" height="30" viewBox="0 0 42 30"><path d="M1.6 0.8 H37.8 M1.6 28.8 H37.8 M1.6 0.8 V10 M1.6 19.6 V28.8 M13.8 0.8 V10 M13.8 19.6 V28.8 M26 0.8 V10 M26 19.6 V28.8 M37.8 0.8 V7.4 M37.8 22 V28.8 M1.6 10 H26 M1.6 19.6 H26" stroke="#5a5a5a" stroke-width="1.4" fill="none"/>
<path d="M6.4 10.4 H21.6 L26.6 14.8 L21.6 19.2 H6.4 Z" fill="#5ba3dc" stroke="#3f8fd0" stroke-width="1"/><path d="M18.4 10.4 V19.2" stroke="#3f8fd0" stroke-width="1.1"/>
<path d="M27 8 L39.6 21.6 M39.6 8 L27 21.6" stroke="#cf3b55" stroke-width="1.5" stroke-linecap="round"/></svg>
<span class="t" style="left:1430.2px;top:160.00px;height:20px;line-height:20px;font-size:15.3px;color:#2b2b2b;transform-origin:center center;transform:translateX(-50%) scaleX(1.0177);">Delete</span>
<svg class="a" style="left:1425.0px;top:186.8px;" width="8.6" height="6.0" viewBox="0 0 8.6 6.0"><path d="M1.70 1.70 L4.30 4.30 L6.90 1.70" fill="none" stroke="#444" stroke-width="1.4" stroke-linecap="round" stroke-linejoin="round"/></svg>
<svg class="a" style="left:1467.8px;top:111.5px;" width="40" height="37" viewBox="0 0 40 37"><path d="M9.4 2.4 H29.4 M9.4 0.6 V4.2 M29.4 0.6 V4.2" stroke="#3f8fb5" stroke-width="1.3" fill="none"/>
<rect x="1.2" y="7.8" width="36.4" height="28" fill="#fff" stroke="#5a5a5a" stroke-width="1.5"/>
<rect x="10.8" y="17" width="17.4" height="9.6" fill="#5ba3dc"/>
<path d="M10.6 7.8 V35.8 M28.4 7.8 V35.8 M1.2 17 H37.6 M1.2 26.6 H37.6" stroke="#5a5a5a" stroke-width="1.3" fill="none"/></svg>
<span class="t" style="left:1487.9px;top:158.60px;height:20px;line-height:20px;font-size:15.3px;color:#2b2b2b;transform-origin:center center;transform:translateX(-50%) scaleX(1.0113);">Format</span>
<svg class="a" style="left:1482.2px;top:185.1px;" width="8.6" height="6.0" viewBox="0 0 8.6 6.0"><path d="M1.70 1.70 L4.30 4.30 L6.90 1.70" fill="none" stroke="#444" stroke-width="1.4" stroke-linecap="round" stroke-linejoin="round"/></svg>
<span class="t" style="left:1429.7px;top:213.50px;height:19px;line-height:19px;font-size:14.3px;color:#3a3a3a;transform-origin:center center;transform:translateX(-50%) scaleX(0.8810);">Cells</span>
<div class="a" style="left:1525.1px;top:111px;width:1px;height:117px;background:#d6d6d6;"></div>
<svg class="a" style="left:1544px;top:113.8px;" width="18" height="21" viewBox="0 0 18 21"><path d="M15.8 4.4 V1.2 H1.8 L9.4 10 L1.8 19 H15.8 V15.6" fill="none" stroke="#3d3d3d" stroke-width="1.5" stroke-linejoin="miter"/></svg>
<svg class="a" style="left:1579.5px;top:121.2px;" width="8.6" height="6.0" viewBox="0 0 8.6 6.0"><path d="M1.70 1.70 L4.30 4.30 L6.90 1.70" fill="none" stroke="#444" stroke-width="1.4" stroke-linecap="round" stroke-linejoin="round"/></svg>
<svg class="a" style="left:1541.8px;top:148px;" width="22" height="20" viewBox="0 0 22 20"><rect x="0.9" y="0.9" width="19.6" height="17.6" fill="#fff" stroke="#4a4a4a" stroke-width="1.4"/><path d="M0.9 3.4 H20.5" stroke="#4a4a4a" stroke-width="1.4"/>
<path d="M10.7 6.4 V14.4 M7.4 11.4 L10.7 14.6 L14 11.4" fill="none" stroke="#2f8fc4" stroke-width="1.4" stroke-linecap="round" stroke-linejoin="round"/></svg>
<svg class="a" style="left:1571.2px;top:155.0px;" width="8.6" height="6.0" viewBox="0 0 8.6 6.0"><path d="M1.70 1.70 L4.30 4.30 L6.90 1.70" fill="none" stroke="#444" stroke-width="1.4" stroke-linecap="round" stroke-linejoin="round"/></svg>
<svg class="a" style="left:1542px;top:181.5px;" width="21" height="20" viewBox="0 0 21 20"><path d="M12.6 1 L19.8 8.2 L9 19 H6.2 L1.2 13.6 Z" fill="#fff" stroke="#8a2da5" stroke-width="1.3" stroke-linejoin="round"/>
<path d="M6.6 7.4 L13.4 14.4 L9 19 H6.2 L1.2 13.6 Z" fill="#cf7fdc" stroke="#8a2da5" stroke-width="1.3" stroke-linejoin="round"/></svg>
<svg class="a" style="left:1571.2px;top:188.5px;" width="8.6" height="6.0" viewBox="0 0 8.6 6.0"><path d="M1.70 1.70 L4.30 4.30 L6.90 1.70" fill="none" stroke="#444" stroke-width="1.4" stroke-linecap="round" stroke-linejoin="round"/></svg>
<span class="t" style="left:1618.4px;top:113.20px;height:22px;line-height:22px;font-size:21.5px;color:#3f8fc8;transform-origin:center center;transform:translateX(-50%) scaleX(0.9342);">A</span>
<span class="t" style="left:1618px;top:131.80px;height:22px;line-height:22px;font-size:21.5px;color:#3d3d3d;transform-origin:center center;transform:translateX(-50%) scaleX(0.9132);">Z</span>
<svg class="a" style="left:1627px;top:123px;" width="23" height="23" viewBox="0 0 23 23"><path d="M1.4 1.4 H21.4 L14.2 11 V20.6 H8.6 V11 Z" fill="#fff" stroke="#3d3d3d" stroke-width="1.4" stroke-linejoin="round"/></svg>
<span class="t" style="left:1630px;top:158.60px;height:20px;line-height:20px;font-size:15.3px;color:#2b2b2b;transform-origin:center center;transform:translateX(-50%) scaleX(1.0349);">Sort &amp;</span>
<span class="t" style="left:1606.4px;top:179.60px;height:20px;line-height:20px;font-size:15.3px;color:#2b2b2b;transform-origin:left center;">Filter</span>
<svg class="a" style="left:1645.4px;top:185.3px;" width="8.6" height="6.0" viewBox="0 0 8.6 6.0"><path d="M1.70 1.70 L4.30 4.30 L6.90 1.70" fill="none" stroke="#444" stroke-width="1.4" stroke-linecap="round" stroke-linejoin="round"/></svg>
<svg class="a" style="left:1671px;top:113.5px;" width="42" height="41" viewBox="0 0 42 41"><circle cx="26.5" cy="15.2" r="13.4" fill="none" stroke="#3d3d3d" stroke-width="1.5"/><path d="M17.2 25 L2 39.4" stroke="#3d3d3d" stroke-width="1.6" stroke-linecap="round"/></svg>
<span class="t" style="left:1692.3px;top:158.60px;height:20px;line-height:20px;font-size:15.3px;color:#2b2b2b;transform-origin:center center;transform:translateX(-50%) scaleX(1.0516);">Find &amp;</span>
<span class="t" style="left:1664.6px;top:179.60px;height:20px;line-height:20px;font-size:15.3px;color:#2b2b2b;transform-origin:left center;transform:scaleX(0.9691);">Select</span>
<svg class="a" style="left:1711.2px;top:185.3px;" width="8.6" height="6.0" viewBox="0 0 8.6 6.0"><path d="M1.70 1.70 L4.30 4.30 L6.90 1.70" fill="none" stroke="#444" stroke-width="1.4" stroke-linecap="round" stroke-linejoin="round"/></svg>
<span class="t" style="left:1629.1px;top:213.50px;height:19px;line-height:19px;font-size:14.3px;color:#3a3a3a;transform-origin:center center;transform:translateX(-50%) scaleX(0.9378);">Editing</span>
<div class="a" style="left:1734.1px;top:111px;width:1px;height:117px;background:#d6d6d6;"></div>
<svg class="a" style="left:1757.2px;top:114.6px;" width="38" height="38" viewBox="0 0 38 38"><rect x="1.2" y="1.2" width="35.4" height="35.4" fill="#fff" stroke="#cf5a3c" stroke-width="1.6"/>
<rect x="4.6" y="4.6" width="12.6" height="12.6" fill="#fff" stroke="#cf5a3c" stroke-width="1.3"/><rect x="20.6" y="4.6" width="12.6" height="12.6" fill="#fff" stroke="#cf5a3c" stroke-width="1.3"/>
<rect x="4.6" y="20.6" width="12.6" height="12.6" fill="#fff" stroke="#cf5a3c" stroke-width="1.3"/><rect x="20.6" y="20.6" width="12.6" height="12.6" fill="#fff" stroke="#cf5a3c" stroke-width="1.3"/></svg>
<span class="t" style="left:1776.5px;top:158.60px;height:20px;line-height:20px;font-size:15.3px;color:#2b2b2b;transform-origin:center center;transform:translateX(-50%) scaleX(1.0487);">Add-ins</span>
<span class="t" style="left:1774.4px;top:213.50px;height:19px;line-height:19px;font-size:14.3px;color:#3a3a3a;transform-origin:center center;transform:translateX(-50%) scaleX(0.9591);">Add-ins</span>
<div class="a" style="left:1816.6px;top:111px;width:1px;height:117px;background:#d6d6d6;"></div>
<svg class="a" style="left:1840px;top:114.6px;" width="39" height="39" viewBox="0 0 39 39"><rect x="0.9" y="0.9" width="36.4" height="36.4" fill="#fff" stroke="#5a5a5a" stroke-width="1.5"/>
<rect x="1.6" y="1.6" width="35" height="3.4" fill="#d0d0d0"/>
<path d="M0.9 17 H37.3 M0.9 27.4 H37.3 M13 27.4 V37.3 M25 27.4 V37.3 M31 6 V17" stroke="#9a9a9a" stroke-width="1.2" fill="none"/>
<path d="M26.4 24 L37.6 36.6" stroke="#4a4a4a" stroke-width="1.6" stroke-linecap="round"/>
<circle cx="17.4" cy="15.2" r="11" fill="#fff" stroke="#4a4a4a" stroke-width="1.5"/>
<rect x="10.6" y="13.8" width="3.6" height="6" fill="#bdbdbd" stroke="#7a7a7a" stroke-width="0.8"/><rect x="15.2" y="8.6" width="3.6" height="11.2" fill="#7fc1a0" stroke="#4a4a4a" stroke-width="0.9"/><rect x="19.8" y="10.8" width="3.6" height="9" fill="#5ba3dc" stroke="#3f8fd0" stroke-width="0.9"/></svg>
<span class="t" style="left:1858.4px;top:158.60px;height:20px;line-height:20px;font-size:15.3px;color:#2b2b2b;transform-origin:center center;transform:translateX(-50%);">Analyze</span>
<span class="t" style="left:1858.7px;top:179.60px;height:20px;line-height:20px;font-size:15.3px;color:#2b2b2b;transform-origin:center center;transform:translateX(-50%) scaleX(1.0058);">Data</span>
<div class="a" style="left:1899.3999999999999px;top:111px;width:1px;height:117px;background:#d6d6d6;"></div>
<svg class="a" style="left:1928px;top:116.5px;" width="36" height="39" viewBox="0 0 36 39"><path d="M2 4.4 Q2 1 5.4 1 H18.6 L26 8.4 V18 M16 30.6 H5.4 Q2 30.6 2 27.2 Z" fill="none" stroke="#6f9bc8" stroke-width="1.5" stroke-linejoin="round"/>
<path d="M2 4.4 V27.2" stroke="#6f9bc8" stroke-width="1.5"/>
<path d="M6.4 20 C9 19 11.2 14 11.6 10.4 C11.8 8 9.8 8.4 10.2 10.6 C10.8 14 14.6 17.6 18 17.6 C20.4 17.6 20 15.6 17.6 15.8 C13.6 16 8.6 18 6.4 20 Z" fill="none" stroke="#8fa3bb" stroke-width="1.1" stroke-linejoin="round"/>
<g fill="none" stroke="#4b8ac4" stroke-width="1.6" stroke-linecap="round"><path d="M23.4 24.6 L26.4 21 Q29 18.4 31.8 20.8 Q34.4 23.4 32 26 L30.4 27.8"/><path d="M26.6 31.6 L23.8 35 Q21.2 37.6 18.4 35.2 Q15.8 32.6 18.2 30 L19.8 28.2"/><path d="M22 32 L28.4 24.4"/></g></svg>
<span class="t" style="left:1940.5px;top:158.60px;height:20px;line-height:20px;font-size:15.3px;color:#2b2b2b;transform-origin:center center;transform:translateX(-50%) scaleX(0.9627);">Crie</span>
<span class="t" style="left:1941.2px;top:179.60px;height:20px;line-height:20px;font-size:15.3px;color:#2b2b2b;transform-origin:center center;transform:translateX(-50%) scaleX(0.9538);">um PDF</span>
<span class="t" style="left:1939.4px;top:213.50px;height:19px;line-height:19px;font-size:14.3px;color:#3a3a3a;transform-origin:center center;transform:translateX(-50%) scaleX(0.9573);">Adobe Ac...</span>
<div class="a" style="left:1981.8999999999999px;top:111px;width:1px;height:117px;background:#d6d6d6;"></div>
<svg class="a" style="left:1995px;top:213px;" width="16" height="9" viewBox="0 0 16 9"><path d="M1.4 1.2 L7.7 7.4 L14 1.2" fill="none" stroke="#3d3d3d" stroke-width="1.5" stroke-linecap="round" stroke-linejoin="round"/></svg>
<div class="a" style="left:0px;top:236px;width:2032px;height:50px;background:rgba(255,255,255,.22);"></div>
<div class="a" style="left:11px;top:246.6px;width:133.5px;height:30px;background:#ffffff;border-radius:6px;box-shadow:0 1px 2px rgba(0,0,0,.10),0 0 1px rgba(0,0,0,.10);"></div>
<span class="t" style="left:18.7px;top:251.30px;height:21px;line-height:21px;font-size:16.3px;color:#2b2b2b;transform-origin:left center;transform:scaleX(1.0222);">H987</span>
<svg class="a" style="left:122.6px;top:259px;" width="15" height="9" viewBox="0 0 15 9"><path d="M1.4 1.4 L7.4 7.2 L13.4 1.4" fill="none" stroke="#3d3d3d" stroke-width="1.6" stroke-linecap="round" stroke-linejoin="round"/></svg>
<div class="a" style="left:155.6px;top:256.4px;width:3px;height:3px;background:#3d3d3d;border-radius:1px;"></div>
<div class="a" style="left:155.6px;top:261.6px;width:3px;height:3px;background:#3d3d3d;border-radius:1px;"></div>
<div class="a" style="left:155.6px;top:266.8px;width:3px;height:3px;background:#3d3d3d;border-radius:1px;"></div>
<div class="a" style="left:171.8px;top:246.6px;width:110px;height:30px;background:#ffffff;border-radius:6px;box-shadow:0 1px 2px rgba(0,0,0,.10),0 0 1px rgba(0,0,0,.10);"></div>
<svg class="a" style="left:180px;top:254px;" width="16" height="16" viewBox="0 0 16 16"><path d="M1.2 1.2 L14.4 14.4 M14.4 1.2 L1.2 14.4" stroke="#c9c9c9" stroke-width="1.4" stroke-linecap="round"/></svg>
<svg class="a" style="left:208.5px;top:253px;" width="22" height="16" viewBox="0 0 22 16"><path d="M1.2 8.6 L7 14.4 L20.4 1.2" fill="none" stroke="#c9c9c9" stroke-width="1.4" stroke-linecap="round" stroke-linejoin="round"/></svg>
<span class="t" style="left:242.5px;top:248.50px;height:24px;line-height:24px;font-size:21px;color:#333;font-style:italic;font-family:'Liberation Serif',serif;transform-origin:left center;transform:scaleX(1.2206);">fx</span>
<svg class="a" style="left:268.5px;top:258.6px;" width="13" height="8" viewBox="0 0 13 8"><path d="M1.2 1.2 L6.4 6.4 L11.6 1.2" fill="none" stroke="#a9a9a9" stroke-width="1.3" stroke-linecap="round" stroke-linejoin="round"/></svg>
<div class="a" style="left:290.8px;top:246.6px;width:1731px;height:30px;background:#ffffff;border-radius:6px;box-shadow:0 1px 2px rgba(0,0,0,.10),0 0 1px rgba(0,0,0,.10);"></div>
<span class="t" style="left:304px;top:251.30px;height:21px;line-height:21px;font-size:16.3px;color:#2b2b2b;transform-origin:left center;transform:scaleX(1.0591);">=H978</span>
<svg class="a" style="left:2002.5px;top:256.5px;" width="15" height="9" viewBox="0 0 15 9"><path d="M1.4 1.4 L7.4 7.2 L13.4 1.4" fill="none" stroke="#3d3d3d" stroke-width="1.5" stroke-linecap="round" stroke-linejoin="round"/></svg>
<div class="a" style="left:0px;top:286px;width:2032px;height:722.5px;background:#ffffff;"></div>
<div class="a" style="left:0px;top:286px;width:45.2px;height:722.5px;background:#fbfbfb;"></div>
<div class="a" style="left:0px;top:286.4px;width:2005.3px;height:19.6px;background:#ececec;"></div>
<div class="a" style="left:45.2px;top:306px;width:34.3px;height:702.5px;background:#efefef;"></div>
<div class="a" style="left:79.3px;top:306px;width:1px;height:702.5px;background:#c4c4c4;"></div>
<div class="a" style="left:45.2px;top:305.8px;width:1960.1px;height:1px;background:#b9b9b9;"></div>
<div class="a" style="left:2.4px;top:286.8px;width:19px;height:18.6px;background:#e2e2e2;border:1px solid #a3a3a3;"></div>
<span class="t" style="left:11.9px;top:288.60px;height:16px;line-height:16px;font-size:12.5px;color:#555;transform-origin:center center;transform:translateX(-50%);">1</span>
<div class="a" style="left:22.2px;top:286.8px;width:19px;height:18.6px;background:#e2e2e2;border:1px solid #a3a3a3;"></div>
<span class="t" style="left:31.7px;top:288.60px;height:16px;line-height:16px;font-size:12.5px;color:#555;transform-origin:center center;transform:translateX(-50%);">2</span>
<svg class="a" style="left:63px;top:292px;" width="13" height="12.5" viewBox="0 0 13 12.5"><path d="M12.6 0.4 V12 H0.6 Z" fill="#d2d2d2"/></svg>
<div class="a" style="left:1095.2px;top:286.4px;width:136.5999999999999px;height:19.6px;background:#dcdcdc;"></div>
<div class="a" style="left:1095.2px;top:304px;width:136.5999999999999px;height:2.4px;background:#1e7145;"></div>
<div class="a" style="left:79.2px;top:288px;width:1px;height:17px;background:#d4d4d4;"></div>
<div class="a" style="left:101.5px;top:288px;width:1px;height:17px;background:#d4d4d4;"></div>
<div class="a" style="left:711.9px;top:288px;width:1px;height:17px;background:#d4d4d4;"></div>
<div class="a" style="left:819.1px;top:288px;width:1px;height:17px;background:#d4d4d4;"></div>
<div class="a" style="left:910.5px;top:288px;width:1px;height:17px;background:#d4d4d4;"></div>
<div class="a" style="left:1002.7px;top:288px;width:1px;height:17px;background:#d4d4d4;"></div>
<div class="a" style="left:1094.7px;top:288px;width:1px;height:17px;background:#d4d4d4;"></div>
<div class="a" style="left:1231.3px;top:288px;width:1px;height:17px;background:#d4d4d4;"></div>
<div class="a" style="left:1367.9px;top:288px;width:1px;height:17px;background:#d4d4d4;"></div>
<div class="a" style="left:1504.5px;top:288px;width:1px;height:17px;background:#d4d4d4;"></div>
<div class="a" style="left:1641.1px;top:288px;width:1px;height:17px;background:#d4d4d4;"></div>
<div class="a" style="left:1777.7px;top:288px;width:1px;height:17px;background:#d4d4d4;"></div>
<div class="a" style="left:1914.3px;top:288px;width:1px;height:17px;background:#d4d4d4;"></div>
<span class="t" style="left:90.85px;top:287.90px;height:17px;line-height:17px;font-size:12.8px;color:#4a4a4a;transform-origin:center center;transform:translateX(-50%);">A</span>
<span class="t" style="left:407.2px;top:287.90px;height:17px;line-height:17px;font-size:12.8px;color:#4a4a4a;transform-origin:center center;transform:translateX(-50%);">B</span>
<span class="t" style="left:723.9px;top:287.90px;height:17px;line-height:17px;font-size:12.8px;color:#4a4a4a;transform-origin:center center;transform:translateX(-50%);">C</span>
<span class="t" style="left:777.5px;top:287.90px;height:17px;line-height:17px;font-size:12.8px;color:#4a4a4a;transform-origin:center center;transform:translateX(-50%);">D</span>
<span class="t" style="left:865.3px;top:287.90px;height:17px;line-height:17px;font-size:12.8px;color:#4a4a4a;transform-origin:center center;transform:translateX(-50%);">E</span>
<span class="t" style="left:957.1px;top:287.90px;height:17px;line-height:17px;font-size:12.8px;color:#4a4a4a;transform-origin:center center;transform:translateX(-50%);">F</span>
<span class="t" style="left:1049.2px;top:287.90px;height:17px;line-height:17px;font-size:12.8px;color:#4a4a4a;transform-origin:center center;transform:translateX(-50%);">G</span>
<span class="t" style="left:1163.5px;top:287.90px;height:17px;line-height:17px;font-size:12.8px;color:#1e7145;transform-origin:center center;transform:translateX(-50%);">H</span>
<span class="t" style="left:1300.8999999999999px;top:287.90px;height:17px;line-height:17px;font-size:12.8px;color:#4a4a4a;transform-origin:center center;transform:translateX(-50%);">I</span>
<span class="t" style="left:1437.5px;top:287.90px;height:17px;line-height:17px;font-size:12.8px;color:#4a4a4a;transform-origin:center center;transform:translateX(-50%);">J</span>
<span class="t" style="left:1574.1px;top:287.90px;height:17px;line-height:17px;font-size:12.8px;color:#4a4a4a;transform-origin:center center;transform:translateX(-50%);">K</span>
<span class="t" style="left:1710.7px;top:287.90px;height:17px;line-height:17px;font-size:12.8px;color:#4a4a4a;transform-origin:center center;transform:translateX(-50%);">L</span>
<span class="t" style="left:1847.3px;top:287.90px;height:17px;line-height:17px;font-size:12.8px;color:#4a4a4a;transform-origin:center center;transform:translateX(-50%);">M</span>
<span class="t" style="left:1984px;top:287.90px;height:17px;line-height:17px;font-size:12.8px;color:#4a4a4a;transform-origin:center center;transform:translateX(-50%);">N</span>
<div class="a" style="left:45.2px;top:306.3px;width:34px;height:702.2px;overflow:hidden">
<div class="a" style="left:0;top:9.90px;width:34px;height:1px;background:#dedede"></div>
<div class="a" style="left:0;top:0.00px;width:34px;height:9.90px;overflow:hidden"><span class="t" style="left:17.2px;top:-6.10px;height:16px;line-height:16px;font-size:12.8px;color:#555;transform:translateX(-50%)">1</span></div>
<div class="a" style="left:0;top:66.50px;width:34px;height:1px;background:#dedede"></div>
<div class="a" style="left:0;top:10.40px;width:34px;height:56.10px;overflow:hidden"><span class="t" style="left:17.2px;top:38.10px;height:16px;line-height:16px;font-size:12.8px;color:#555;transform:translateX(-50%)">2</span></div>
<div class="a" style="left:0;top:94.00px;width:34px;height:1px;background:#dedede"></div>
<div class="a" style="left:0;top:67.00px;width:34px;height:27.00px;overflow:hidden"><span class="t" style="left:17.2px;top:9.30px;height:16px;line-height:16px;font-size:12.8px;color:#555;transform:translateX(-50%)">3</span></div>
<div class="a" style="left:0;top:104.50px;width:34px;height:1px;background:#dedede"></div>
<div class="a" style="left:0;top:94.50px;width:34px;height:10.00px;overflow:hidden"><span class="t" style="left:17.2px;top:-4.60px;height:16px;line-height:16px;font-size:12.8px;color:#555;transform:translateX(-50%)">4</span></div>
<div class="a" style="left:0;top:125.70px;width:34px;height:1px;background:#dedede"></div>
<div class="a" style="left:0;top:105.00px;width:34px;height:20.70px;overflow:hidden"><span class="t" style="left:17.2px;top:3.90px;height:16px;line-height:16px;font-size:12.8px;color:#555;transform:translateX(-50%)">5</span></div>
<div class="a" style="left:0;top:146.90px;width:34px;height:1px;background:#dedede"></div>
<div class="a" style="left:0;top:126.20px;width:34px;height:20.70px;overflow:hidden"><span class="t" style="left:17.2px;top:3.50px;height:16px;line-height:16px;font-size:12.8px;color:#555;transform:translateX(-50%)">6</span></div>
<div class="a" style="left:0;top:167.80px;width:34px;height:1px;background:#dedede"></div>
<div class="a" style="left:0;top:147.40px;width:34px;height:20.40px;overflow:hidden"><span class="t" style="left:17.2px;top:3.40px;height:16px;line-height:16px;font-size:12.8px;color:#555;transform:translateX(-50%)">7</span></div>
<div class="a" style="left:0;top:189.37px;width:34px;height:1px;background:#dedede"></div>
<div class="a" style="left:0;top:168.70px;width:34px;height:20.67px;overflow:hidden"><span class="t" style="left:17.2px;top:4.00px;height:16px;line-height:16px;font-size:12.8px;color:#555;transform:translateX(-50%)">982</span></div>
<div class="a" style="left:0;top:210.54px;width:34px;height:1px;background:#dedede"></div>
<div class="a" style="left:0;top:189.87px;width:34px;height:20.67px;overflow:hidden"><span class="t" style="left:17.2px;top:4.00px;height:16px;line-height:16px;font-size:12.8px;color:#555;transform:translateX(-50%)">983</span></div>
<div class="a" style="left:0;top:231.71px;width:34px;height:1px;background:#dedede"></div>
<div class="a" style="left:0;top:211.04px;width:34px;height:20.67px;overflow:hidden"><span class="t" style="left:17.2px;top:4.00px;height:16px;line-height:16px;font-size:12.8px;color:#555;transform:translateX(-50%)">984</span></div>
<div class="a" style="left:0;top:252.88px;width:34px;height:1px;background:#dedede"></div>
<div class="a" style="left:0;top:232.21px;width:34px;height:20.67px;overflow:hidden"><span class="t" style="left:17.2px;top:4.00px;height:16px;line-height:16px;font-size:12.8px;color:#555;transform:translateX(-50%)">985</span></div>
<div class="a" style="left:0;top:274.05px;width:34px;height:1px;background:#dedede"></div>
<div class="a" style="left:0;top:253.38px;width:34px;height:20.67px;overflow:hidden"><span class="t" style="left:17.2px;top:4.00px;height:16px;line-height:16px;font-size:12.8px;color:#555;transform:translateX(-50%)">986</span></div>
<div class="a" style="left:0;top:274.85px;width:34px;height:21.17px;background:#dadedb"></div>
<div class="a" style="left:32.4px;top:274.55px;width:1.8px;height:21.77px;background:#1e7145"></div>
<div class="a" style="left:0;top:295.22px;width:34px;height:1px;background:#dedede"></div>
<div class="a" style="left:0;top:274.55px;width:34px;height:20.67px;overflow:hidden"><span class="t" style="left:17.2px;top:4.00px;height:16px;line-height:16px;font-size:12.8px;color:#2f7d4f;transform:translateX(-50%)">987</span></div>
<div class="a" style="left:0;top:316.39px;width:34px;height:1px;background:#dedede"></div>
<div class="a" style="left:0;top:295.72px;width:34px;height:20.67px;overflow:hidden"><span class="t" style="left:17.2px;top:4.00px;height:16px;line-height:16px;font-size:12.8px;color:#555;transform:translateX(-50%)">988</span></div>
<div class="a" style="left:0;top:337.56px;width:34px;height:1px;background:#dedede"></div>
<div class="a" style="left:0;top:316.89px;width:34px;height:20.67px;overflow:hidden"><span class="t" style="left:17.2px;top:4.00px;height:16px;line-height:16px;font-size:12.8px;color:#555;transform:translateX(-50%)">989</span></div>
<div class="a" style="left:0;top:358.73px;width:34px;height:1px;background:#dedede"></div>
<div class="a" style="left:0;top:338.06px;width:34px;height:20.67px;overflow:hidden"><span class="t" style="left:17.2px;top:4.00px;height:16px;line-height:16px;font-size:12.8px;color:#555;transform:translateX(-50%)">990</span></div>
<div class="a" style="left:0;top:379.90px;width:34px;height:1px;background:#dedede"></div>
<div class="a" style="left:0;top:359.23px;width:34px;height:20.67px;overflow:hidden"><span class="t" style="left:17.2px;top:4.00px;height:16px;line-height:16px;font-size:12.8px;color:#555;transform:translateX(-50%)">991</span></div>
<div class="a" style="left:0;top:401.07px;width:34px;height:1px;background:#dedede"></div>
<div class="a" style="left:0;top:380.40px;width:34px;height:20.67px;overflow:hidden"><span class="t" style="left:17.2px;top:4.00px;height:16px;line-height:16px;font-size:12.8px;color:#555;transform:translateX(-50%)">992</span></div>
<div class="a" style="left:0;top:422.24px;width:34px;height:1px;background:#dedede"></div>
<div class="a" style="left:0;top:401.57px;width:34px;height:20.67px;overflow:hidden"><span class="t" style="left:17.2px;top:4.00px;height:16px;line-height:16px;font-size:12.8px;color:#555;transform:translateX(-50%)">993</span></div>
<div class="a" style="left:0;top:443.41px;width:34px;height:1px;background:#dedede"></div>
<div class="a" style="left:0;top:422.74px;width:34px;height:20.67px;overflow:hidden"><span class="t" style="left:17.2px;top:4.00px;height:16px;line-height:16px;font-size:12.8px;color:#555;transform:translateX(-50%)">994</span></div>
<div class="a" style="left:0;top:464.58px;width:34px;height:1px;background:#dedede"></div>
<div class="a" style="left:0;top:443.91px;width:34px;height:20.67px;overflow:hidden"><span class="t" style="left:17.2px;top:4.00px;height:16px;line-height:16px;font-size:12.8px;color:#555;transform:translateX(-50%)">995</span></div>
<div class="a" style="left:0;top:485.75px;width:34px;height:1px;background:#dedede"></div>
<div class="a" style="left:0;top:465.08px;width:34px;height:20.67px;overflow:hidden"><span class="t" style="left:17.2px;top:4.00px;height:16px;line-height:16px;font-size:12.8px;color:#555;transform:translateX(-50%)">996</span></div>
<div class="a" style="left:0;top:506.92px;width:34px;height:1px;background:#dedede"></div>
<div class="a" style="left:0;top:486.25px;width:34px;height:20.67px;overflow:hidden"><span class="t" style="left:17.2px;top:4.00px;height:16px;line-height:16px;font-size:12.8px;color:#555;transform:translateX(-50%)">997</span></div>
<div class="a" style="left:0;top:528.09px;width:34px;height:1px;background:#dedede"></div>
<div class="a" style="left:0;top:507.42px;width:34px;height:20.67px;overflow:hidden"><span class="t" style="left:17.2px;top:4.00px;height:16px;line-height:16px;font-size:12.8px;color:#555;transform:translateX(-50%)">998</span></div>
<div class="a" style="left:0;top:549.26px;width:34px;height:1px;background:#dedede"></div>
<div class="a" style="left:0;top:528.59px;width:34px;height:20.67px;overflow:hidden"><span class="t" style="left:17.2px;top:4.00px;height:16px;line-height:16px;font-size:12.8px;color:#555;transform:translateX(-50%)">999</span></div>
<div class="a" style="left:0;top:570.43px;width:34px;height:1px;background:#dedede"></div>
<div class="a" style="left:0;top:549.76px;width:34px;height:20.67px;overflow:hidden"><span class="t" style="left:17.2px;top:4.00px;height:16px;line-height:16px;font-size:12.8px;color:#555;transform:translateX(-50%) scaleX(0.94)">1000</span></div>
<div class="a" style="left:0;top:591.60px;width:34px;height:1px;background:#dedede"></div>
<div class="a" style="left:0;top:570.93px;width:34px;height:20.67px;overflow:hidden"><span class="t" style="left:17.2px;top:4.00px;height:16px;line-height:16px;font-size:12.8px;color:#555;transform:translateX(-50%) scaleX(0.94)">1001</span></div>
<div class="a" style="left:0;top:612.77px;width:34px;height:1px;background:#dedede"></div>
<div class="a" style="left:0;top:592.10px;width:34px;height:20.67px;overflow:hidden"><span class="t" style="left:17.2px;top:4.00px;height:16px;line-height:16px;font-size:12.8px;color:#555;transform:translateX(-50%) scaleX(0.94)">1002</span></div>
<div class="a" style="left:0;top:633.94px;width:34px;height:1px;background:#dedede"></div>
<div class="a" style="left:0;top:613.27px;width:34px;height:20.67px;overflow:hidden"><span class="t" style="left:17.2px;top:4.00px;height:16px;line-height:16px;font-size:12.8px;color:#555;transform:translateX(-50%) scaleX(0.94)">1003</span></div>
<div class="a" style="left:0;top:655.11px;width:34px;height:1px;background:#dedede"></div>
<div class="a" style="left:0;top:634.44px;width:34px;height:20.67px;overflow:hidden"><span class="t" style="left:17.2px;top:4.00px;height:16px;line-height:16px;font-size:12.8px;color:#555;transform:translateX(-50%) scaleX(0.94)">1004</span></div>
<div class="a" style="left:0;top:676.28px;width:34px;height:1px;background:#dedede"></div>
<div class="a" style="left:0;top:655.61px;width:34px;height:20.67px;overflow:hidden"><span class="t" style="left:17.2px;top:4.00px;height:16px;line-height:16px;font-size:12.8px;color:#555;transform:translateX(-50%) scaleX(0.94)">1005</span></div>
<div class="a" style="left:0;top:697.45px;width:34px;height:1px;background:#dedede"></div>
<div class="a" style="left:0;top:676.78px;width:34px;height:20.67px;overflow:hidden"><span class="t" style="left:17.2px;top:4.00px;height:16px;line-height:16px;font-size:12.8px;color:#555;transform:translateX(-50%) scaleX(0.94)">1006</span></div>
<div class="a" style="left:0;top:718.62px;width:34px;height:1px;background:#dedede"></div>
<div class="a" style="left:0;top:697.95px;width:34px;height:20.67px;overflow:hidden"><span class="t" style="left:17.2px;top:4.00px;height:16px;line-height:16px;font-size:12.8px;color:#555;transform:translateX(-50%) scaleX(0.94)">1007</span></div>
</div>
<div class="a" style="left:0;top:306.3px;width:2005.3px;height:702.2px;overflow:hidden"><div class="a" style="left:0;top:-306.3px;width:2005.3px;height:1080px">
<span class="t" style="left:108.3px;top:330.60px;height:30px;line-height:30px;font-size:25px;color:#1b5583;font-weight:700;transform-origin:left center;">Project X</span>
<span class="t" style="left:841.7px;top:336.30px;height:20px;line-height:20px;font-size:16.45px;color:#55b862;font-style:italic;transform-origin:left center;">TRUE</span>
<div class="a" style="left:102px;top:371.3px;width:1903.3px;height:2.1px;background:#174a69;"></div>
<span class="t" style="left:108px;top:413.40px;height:20px;line-height:20px;font-size:16.8px;color:#111;font-weight:700;font-style:italic;transform-origin:left center;">Asset 1</span>
<span class="t" style="left:1164.8px;top:413.00px;height:20px;line-height:20px;font-size:16.8px;color:#111;font-weight:700;transform-origin:center center;transform:translateX(-50%);">2023E</span>
<span class="t" style="left:1301.3999999999999px;top:413.00px;height:20px;line-height:20px;font-size:16.8px;color:#111;font-weight:700;transform-origin:center center;transform:translateX(-50%);">2024E</span>
<span class="t" style="left:1438.0px;top:413.00px;height:20px;line-height:20px;font-size:16.8px;color:#111;font-weight:700;transform-origin:center center;transform:translateX(-50%);">2025E</span>
<span class="t" style="left:1574.6px;top:413.00px;height:20px;line-height:20px;font-size:16.8px;color:#111;font-weight:700;transform-origin:center center;transform:translateX(-50%);">2026E</span>
<span class="t" style="left:1711.2px;top:413.00px;height:20px;line-height:20px;font-size:16.8px;color:#111;font-weight:700;transform-origin:center center;transform:translateX(-50%);">2027E</span>
<span class="t" style="left:1847.8px;top:413.00px;height:20px;line-height:20px;font-size:16.8px;color:#111;font-weight:700;transform-origin:center center;transform:translateX(-50%);">2028E</span>
<span class="t" style="left:1984.3999999999999px;top:413.00px;height:20px;line-height:20px;font-size:16.8px;color:#111;font-weight:700;transform-origin:center center;transform:translateX(-50%);">2029E</span>
<div class="a" style="left:102px;top:453.2px;width:1903.3px;height:21.5px;background:#0f4c78;"></div>
<span class="t" style="left:91.2px;top:454.60px;height:20px;line-height:20px;font-size:17.5px;color:#c4122f;font-weight:700;-webkit-text-stroke:0.4px #c4122f;transform-origin:center center;transform:translateX(-50%);">x</span>
<span class="t" style="left:107.5px;top:454.90px;height:20px;line-height:20px;font-size:16.8px;color:#fff;font-weight:700;transform-origin:left center;">Macro Support</span>
<span class="t" style="left:778.3px;top:454.90px;height:20px;line-height:20px;font-size:16.8px;color:#fff;font-weight:700;transform-origin:center center;transform:translateX(-50%);">Unit</span>
<span class="t" style="left:866px;top:454.90px;height:20px;line-height:20px;font-size:16.8px;color:#fff;font-weight:700;transform-origin:center center;transform:translateX(-50%);">Aux1</span>
<span class="t" style="left:958px;top:454.90px;height:20px;line-height:20px;font-size:16.8px;color:#fff;font-weight:700;transform-origin:center center;transform:translateX(-50%);">Aux2</span>
<span class="t" style="left:1050.2px;top:454.90px;height:20px;line-height:20px;font-size:16.8px;color:#fff;font-weight:700;transform-origin:center center;transform:translateX(-50%);">Aux3</span>
<span class="t" style="left:121.3px;top:475.70px;height:20px;line-height:20px;font-size:16.45px;color:#111;transform-origin:left center;">PIS / COFINS aliquot</span>
<span class="t" style="left:777.4px;top:475.70px;height:20px;line-height:20px;font-size:16.45px;color:#111;transform-origin:center center;transform:translateX(-50%);">%</span>
<span class="t" style="left:120.6px;top:496.87px;height:20px;line-height:20px;font-size:16.45px;color:#111;transform-origin:left center;">ICMS aliquot</span>
<span class="t" style="left:777.4px;top:496.87px;height:20px;line-height:20px;font-size:16.45px;color:#111;transform-origin:center center;transform:translateX(-50%);">%</span>
<span class="t" style="left:1162.0px;top:475.80px;height:20px;line-height:20px;font-size:16.45px;color:#111;transform-origin:center center;transform:translateX(-50%);">9.3%</span>
<span class="t" style="left:1162.0px;top:496.97px;height:20px;line-height:20px;font-size:16.45px;color:#111;transform-origin:center center;transform:translateX(-50%);">12.0%</span>
<span class="t" style="left:1298.6px;top:475.80px;height:20px;line-height:20px;font-size:16.45px;color:#111;transform-origin:center center;transform:translateX(-50%);">9.3%</span>
<span class="t" style="left:1298.6px;top:496.97px;height:20px;line-height:20px;font-size:16.45px;color:#111;transform-origin:center center;transform:translateX(-50%);">12.0%</span>
<span class="t" style="left:1435.2px;top:475.80px;height:20px;line-height:20px;font-size:16.45px;color:#111;transform-origin:center center;transform:translateX(-50%);">9.3%</span>
<span class="t" style="left:1435.2px;top:496.97px;height:20px;line-height:20px;font-size:16.45px;color:#111;transform-origin:center center;transform:translateX(-50%);">12.0%</span>
<span class="t" style="left:1571.8px;top:475.80px;height:20px;line-height:20px;font-size:16.45px;color:#111;transform-origin:center center;transform:translateX(-50%);">9.3%</span>
<span class="t" style="left:1571.8px;top:496.97px;height:20px;line-height:20px;font-size:16.45px;color:#111;transform-origin:center center;transform:translateX(-50%);">12.0%</span>
<span class="t" style="left:1708.4px;top:475.80px;height:20px;line-height:20px;font-size:16.45px;color:#111;transform-origin:center center;transform:translateX(-50%);">9.3%</span>
<span class="t" style="left:1708.4px;top:496.97px;height:20px;line-height:20px;font-size:16.45px;color:#111;transform-origin:center center;transform:translateX(-50%);">12.0%</span>
<span class="t" style="left:1845.0px;top:475.80px;height:20px;line-height:20px;font-size:16.45px;color:#111;transform-origin:center center;transform:translateX(-50%);">9.3%</span>
<span class="t" style="left:1845.0px;top:496.97px;height:20px;line-height:20px;font-size:16.45px;color:#111;transform-origin:center center;transform:translateX(-50%);">12.0%</span>
<span class="t" style="left:1981.6px;top:475.80px;height:20px;line-height:20px;font-size:16.45px;color:#111;transform-origin:center center;transform:translateX(-50%);">9.3%</span>
<span class="t" style="left:1981.6px;top:496.97px;height:20px;line-height:20px;font-size:16.45px;color:#111;transform-origin:center center;transform:translateX(-50%);">12.0%</span>
<div class="a" style="left:102px;top:538px;width:1903.3px;height:21.8px;background:#1787bf;"></div>
<span class="t" style="left:91.2px;top:539.21px;height:20px;line-height:20px;font-size:17.5px;color:#c4122f;font-weight:700;-webkit-text-stroke:0.4px #c4122f;transform-origin:center center;transform:translateX(-50%);">x</span>
<span class="t" style="left:107.6px;top:539.31px;height:20px;line-height:20px;font-size:16.8px;color:#fff;font-weight:700;transform-origin:left center;">D&amp;A</span>
<span class="t" style="left:108.6px;top:581.95px;height:20px;line-height:20px;font-size:16.8px;color:#111;font-weight:700;transform-origin:left center;">Total Capex</span>
<span class="t" style="left:778.2px;top:581.95px;height:20px;line-height:20px;font-size:16.8px;color:#111;font-weight:700;transform-origin:center center;transform:translateX(-50%);">R$ 000s</span>
<span class="t" style="left:1164.9px;top:581.25px;height:20px;line-height:20px;font-size:16.8px;color:#111;font-weight:700;transform-origin:center center;transform:translateX(-50%);">-</span>
<span class="t" style="left:1301.5px;top:581.25px;height:20px;line-height:20px;font-size:16.8px;color:#111;font-weight:700;transform-origin:center center;transform:translateX(-50%);">-</span>
<span class="t" style="left:1438.1000000000001px;top:581.25px;height:20px;line-height:20px;font-size:16.8px;color:#111;font-weight:700;transform-origin:center center;transform:translateX(-50%);">-</span>
<span class="t" style="left:1571.8px;top:581.95px;height:20px;line-height:20px;font-size:16.8px;color:#111;font-weight:700;transform-origin:center center;transform:translateX(-50%);">503,922</span>
<span class="t" style="left:1711.3000000000002px;top:581.25px;height:20px;line-height:20px;font-size:16.8px;color:#111;font-weight:700;transform-origin:center center;transform:translateX(-50%);">-</span>
<span class="t" style="left:1845.0px;top:581.95px;height:20px;line-height:20px;font-size:16.8px;color:#111;font-weight:700;transform-origin:center center;transform:translateX(-50%);">8,579</span>
<span class="t" style="left:1981.6px;top:581.95px;height:20px;line-height:20px;font-size:16.8px;color:#111;font-weight:700;transform-origin:center center;transform:translateX(-50%);">8,579</span>
<div class="a" style="left:819.9px;top:623.19px;width:91.2px;height:84.68px;background:#ffff99;"></div>
<span class="t" style="left:106.8px;top:623.69px;height:20px;line-height:20px;font-size:16.45px;color:#111;transform-origin:left center;">Depreciation Rate</span>
<span class="t" style="left:777.6px;top:623.69px;height:20px;line-height:20px;font-size:16.45px;color:#111;transform-origin:center center;transform:translateX(-50%);">%</span>
<span class="t" style="left:863px;top:623.69px;height:20px;line-height:20px;font-size:16.45px;color:#111;transform-origin:center center;transform:translateX(-50%);">8.33%</span>
<span class="t" style="left:106.8px;top:644.86px;height:20px;line-height:20px;font-size:16.45px;color:#111;transform-origin:left center;">Depreciation Rate in years</span>
<span class="t" style="left:777.6px;top:644.86px;height:20px;line-height:20px;font-size:16.45px;color:#111;transform-origin:center center;transform:translateX(-50%);">Years</span>
<span class="t" style="left:863px;top:644.86px;height:20px;line-height:20px;font-size:16.45px;color:#111;transform-origin:center center;transform:translateX(-50%);">12</span>
<span class="t" style="left:106.8px;top:666.03px;height:20px;line-height:20px;font-size:16.45px;color:#111;transform-origin:left center;">Mid Year Convention (1=off ; 2=on)</span>
<span class="t" style="left:777.6px;top:666.03px;height:20px;line-height:20px;font-size:16.45px;color:#111;transform-origin:center center;transform:translateX(-50%);">Ratio</span>
<span class="t" style="left:863px;top:666.03px;height:20px;line-height:20px;font-size:16.45px;color:#111;transform-origin:center center;transform:translateX(-50%);">1</span>
<span class="t" style="left:106.8px;top:687.20px;height:20px;line-height:20px;font-size:16.45px;color:#111;transform-origin:left center;">Grace Period</span>
<span class="t" style="left:777.6px;top:687.20px;height:20px;line-height:20px;font-size:16.45px;color:#111;transform-origin:center center;transform:translateX(-50%);">Years</span>
<span class="t" style="left:863px;top:687.20px;height:20px;line-height:20px;font-size:16.45px;color:#111;transform-origin:center center;transform:translateX(-50%);">1</span>
<span class="t" style="left:106.8px;top:730.54px;height:20px;line-height:20px;font-size:16.8px;color:#111;font-weight:700;transform-origin:left center;">Depreciation Curve</span>
<span class="t" style="left:778.2px;top:730.54px;height:20px;line-height:20px;font-size:16.8px;color:#111;font-weight:700;transform-origin:center center;transform:translateX(-50%);">R$ 000s</span>
<span class="t" style="left:865.8px;top:730.54px;height:20px;line-height:20px;font-size:16.8px;color:#111;font-weight:700;transform-origin:center center;transform:translateX(-50%);">Capex</span>
<span class="t" style="left:105.6px;top:751.11px;height:20px;line-height:20px;font-size:16.45px;color:#111;transform-origin:left center;">Invested on 2022A</span>
<span class="t" style="left:777.4px;top:751.11px;height:20px;line-height:20px;font-size:16.45px;color:#111;transform-origin:center center;transform:translateX(-50%);">R$ 000s</span>
<span class="t" style="left:866.3px;top:750.81px;height:20px;line-height:20px;font-size:16.45px;color:#111;transform-origin:center center;transform:translateX(-50%);">-</span>
<span class="t" style="left:1165.0px;top:750.81px;height:20px;line-height:20px;font-size:16.45px;color:#111;transform-origin:center center;transform:translateX(-50%);">-</span>
<span class="t" style="left:1301.6px;top:750.81px;height:20px;line-height:20px;font-size:16.45px;color:#111;transform-origin:center center;transform:translateX(-50%);">-</span>
<span class="t" style="left:1438.2px;top:750.81px;height:20px;line-height:20px;font-size:16.45px;color:#111;transform-origin:center center;transform:translateX(-50%);">-</span>
<span class="t" style="left:1574.8px;top:750.81px;height:20px;line-height:20px;font-size:16.45px;color:#111;transform-origin:center center;transform:translateX(-50%);">-</span>
<span class="t" style="left:1711.4px;top:750.81px;height:20px;line-height:20px;font-size:16.45px;color:#111;transform-origin:center center;transform:translateX(-50%);">-</span>
<span class="t" style="left:1848.0px;top:750.81px;height:20px;line-height:20px;font-size:16.45px;color:#111;transform-origin:center center;transform:translateX(-50%);">-</span>
<span class="t" style="left:1984.6px;top:750.81px;height:20px;line-height:20px;font-size:16.45px;color:#111;transform-origin:center center;transform:translateX(-50%);">-</span>
<span class="t" style="left:105.6px;top:772.28px;height:20px;line-height:20px;font-size:16.45px;color:#111;transform-origin:left center;">Invested on 2023E</span>
<span class="t" style="left:777.4px;top:772.28px;height:20px;line-height:20px;font-size:16.45px;color:#111;transform-origin:center center;transform:translateX(-50%);">R$ 000s</span>
<span class="t" style="left:866.3px;top:771.98px;height:20px;line-height:20px;font-size:16.45px;color:#111;transform-origin:center center;transform:translateX(-50%);">-</span>
<span class="t" style="left:1165.0px;top:771.98px;height:20px;line-height:20px;font-size:16.45px;color:#111;transform-origin:center center;transform:translateX(-50%);">-</span>
<span class="t" style="left:1301.6px;top:771.98px;height:20px;line-height:20px;font-size:16.45px;color:#111;transform-origin:center center;transform:translateX(-50%);">-</span>
<span class="t" style="left:1438.2px;top:771.98px;height:20px;line-height:20px;font-size:16.45px;color:#111;transform-origin:center center;transform:translateX(-50%);">-</span>
<span class="t" style="left:1574.8px;top:771.98px;height:20px;line-height:20px;font-size:16.45px;color:#111;transform-origin:center center;transform:translateX(-50%);">-</span>
<span class="t" style="left:1711.4px;top:771.98px;height:20px;line-height:20px;font-size:16.45px;color:#111;transform-origin:center center;transform:translateX(-50%);">-</span>
<span class="t" style="left:1848.0px;top:771.98px;height:20px;line-height:20px;font-size:16.45px;color:#111;transform-origin:center center;transform:translateX(-50%);">-</span>
<span class="t" style="left:1984.6px;top:771.98px;height:20px;line-height:20px;font-size:16.45px;color:#111;transform-origin:center center;transform:translateX(-50%);">-</span>
<span class="t" style="left:105.6px;top:793.45px;height:20px;line-height:20px;font-size:16.45px;color:#111;transform-origin:left center;">Invested on 2024E</span>
<span class="t" style="left:777.4px;top:793.45px;height:20px;line-height:20px;font-size:16.45px;color:#111;transform-origin:center center;transform:translateX(-50%);">R$ 000s</span>
<span class="t" style="left:866.3px;top:793.15px;height:20px;line-height:20px;font-size:16.45px;color:#111;transform-origin:center center;transform:translateX(-50%);">-</span>
<span class="t" style="left:1165.0px;top:793.15px;height:20px;line-height:20px;font-size:16.45px;color:#111;transform-origin:center center;transform:translateX(-50%);">-</span>
<span class="t" style="left:1301.6px;top:793.15px;height:20px;line-height:20px;font-size:16.45px;color:#111;transform-origin:center center;transform:translateX(-50%);">-</span>
<span class="t" style="left:1438.2px;top:793.15px;height:20px;line-height:20px;font-size:16.45px;color:#111;transform-origin:center center;transform:translateX(-50%);">-</span>
<span class="t" style="left:1574.8px;top:793.15px;height:20px;line-height:20px;font-size:16.45px;color:#111;transform-origin:center center;transform:translateX(-50%);">-</span>
<span class="t" style="left:1711.4px;top:793.15px;height:20px;line-height:20px;font-size:16.45px;color:#111;transform-origin:center center;transform:translateX(-50%);">-</span>
<span class="t" style="left:1848.0px;top:793.15px;height:20px;line-height:20px;font-size:16.45px;color:#111;transform-origin:center center;transform:translateX(-50%);">-</span>
<span class="t" style="left:1984.6px;top:793.15px;height:20px;line-height:20px;font-size:16.45px;color:#111;transform-origin:center center;transform:translateX(-50%);">-</span>
<span class="t" style="left:105.6px;top:814.62px;height:20px;line-height:20px;font-size:16.45px;color:#111;transform-origin:left center;">Invested on 2025E</span>
<span class="t" style="left:777.4px;top:814.62px;height:20px;line-height:20px;font-size:16.45px;color:#111;transform-origin:center center;transform:translateX(-50%);">R$ 000s</span>
<span class="t" style="left:866.3px;top:814.32px;height:20px;line-height:20px;font-size:16.45px;color:#111;transform-origin:center center;transform:translateX(-50%);">-</span>
<span class="t" style="left:1165.0px;top:814.32px;height:20px;line-height:20px;font-size:16.45px;color:#111;transform-origin:center center;transform:translateX(-50%);">-</span>
<span class="t" style="left:1301.6px;top:814.32px;height:20px;line-height:20px;font-size:16.45px;color:#111;transform-origin:center center;transform:translateX(-50%);">-</span>
<span class="t" style="left:1438.2px;top:814.32px;height:20px;line-height:20px;font-size:16.45px;color:#111;transform-origin:center center;transform:translateX(-50%);">-</span>
<span class="t" style="left:1574.8px;top:814.32px;height:20px;line-height:20px;font-size:16.45px;color:#111;transform-origin:center center;transform:translateX(-50%);">-</span>
<span class="t" style="left:1711.4px;top:814.32px;height:20px;line-height:20px;font-size:16.45px;color:#111;transform-origin:center center;transform:translateX(-50%);">-</span>
<span class="t" style="left:1848.0px;top:814.32px;height:20px;line-height:20px;font-size:16.45px;color:#111;transform-origin:center center;transform:translateX(-50%);">-</span>
<span class="t" style="left:1984.6px;top:814.32px;height:20px;line-height:20px;font-size:16.45px;color:#111;transform-origin:center center;transform:translateX(-50%);">-</span>
<span class="t" style="left:105.6px;top:835.79px;height:20px;line-height:20px;font-size:16.45px;color:#111;transform-origin:left center;">Invested on 2026E</span>
<span class="t" style="left:777.4px;top:835.79px;height:20px;line-height:20px;font-size:16.45px;color:#111;transform-origin:center center;transform:translateX(-50%);">R$ 000s</span>
<span class="t" style="left:863.4px;top:835.79px;height:20px;line-height:20px;font-size:16.45px;color:#111;transform-origin:center center;transform:translateX(-50%);">503,922</span>
<span class="t" style="left:1165.0px;top:835.49px;height:20px;line-height:20px;font-size:16.45px;color:#111;transform-origin:center center;transform:translateX(-50%);">-</span>
<span class="t" style="left:1301.6px;top:835.49px;height:20px;line-height:20px;font-size:16.45px;color:#111;transform-origin:center center;transform:translateX(-50%);">-</span>
<span class="t" style="left:1438.2px;top:835.49px;height:20px;line-height:20px;font-size:16.45px;color:#111;transform-origin:center center;transform:translateX(-50%);">-</span>
<span class="t" style="left:1574.8px;top:835.49px;height:20px;line-height:20px;font-size:16.45px;color:#111;transform-origin:center center;transform:translateX(-50%);">-</span>
<span class="t" style="left:1707.8000000000002px;top:835.79px;height:20px;line-height:20px;font-size:16.45px;color:#111;transform-origin:center center;transform:translateX(-50%);">41,993</span>
<span class="t" style="left:1844.4px;top:835.79px;height:20px;line-height:20px;font-size:16.45px;color:#111;transform-origin:center center;transform:translateX(-50%);">41,993</span>
<span class="t" style="left:1981.0px;top:835.79px;height:20px;line-height:20px;font-size:16.45px;color:#111;transform-origin:center center;transform:translateX(-50%);">41,993</span>
<span class="t" style="left:105.6px;top:856.96px;height:20px;line-height:20px;font-size:16.45px;color:#111;transform-origin:left center;">Invested on 2027E</span>
<span class="t" style="left:777.4px;top:856.96px;height:20px;line-height:20px;font-size:16.45px;color:#111;transform-origin:center center;transform:translateX(-50%);">R$ 000s</span>
<span class="t" style="left:866.3px;top:856.66px;height:20px;line-height:20px;font-size:16.45px;color:#111;transform-origin:center center;transform:translateX(-50%);">-</span>
<span class="t" style="left:1165.0px;top:856.66px;height:20px;line-height:20px;font-size:16.45px;color:#111;transform-origin:center center;transform:translateX(-50%);">-</span>
<span class="t" style="left:1301.6px;top:856.66px;height:20px;line-height:20px;font-size:16.45px;color:#111;transform-origin:center center;transform:translateX(-50%);">-</span>
<span class="t" style="left:1438.2px;top:856.66px;height:20px;line-height:20px;font-size:16.45px;color:#111;transform-origin:center center;transform:translateX(-50%);">-</span>
<span class="t" style="left:1574.8px;top:856.66px;height:20px;line-height:20px;font-size:16.45px;color:#111;transform-origin:center center;transform:translateX(-50%);">-</span>
<span class="t" style="left:1711.4px;top:856.66px;height:20px;line-height:20px;font-size:16.45px;color:#111;transform-origin:center center;transform:translateX(-50%);">-</span>
<span class="t" style="left:1848.0px;top:856.66px;height:20px;line-height:20px;font-size:16.45px;color:#111;transform-origin:center center;transform:translateX(-50%);">-</span>
<span class="t" style="left:1984.6px;top:856.66px;height:20px;line-height:20px;font-size:16.45px;color:#111;transform-origin:center center;transform:translateX(-50%);">-</span>
<span class="t" style="left:105.6px;top:878.13px;height:20px;line-height:20px;font-size:16.45px;color:#111;transform-origin:left center;">Invested on 2028E</span>
<span class="t" style="left:777.4px;top:878.13px;height:20px;line-height:20px;font-size:16.45px;color:#111;transform-origin:center center;transform:translateX(-50%);">R$ 000s</span>
<span class="t" style="left:863.4px;top:878.13px;height:20px;line-height:20px;font-size:16.45px;color:#111;transform-origin:center center;transform:translateX(-50%);">8,579</span>
<span class="t" style="left:1165.0px;top:877.83px;height:20px;line-height:20px;font-size:16.45px;color:#111;transform-origin:center center;transform:translateX(-50%);">-</span>
<span class="t" style="left:1301.6px;top:877.83px;height:20px;line-height:20px;font-size:16.45px;color:#111;transform-origin:center center;transform:translateX(-50%);">-</span>
<span class="t" style="left:1438.2px;top:877.83px;height:20px;line-height:20px;font-size:16.45px;color:#111;transform-origin:center center;transform:translateX(-50%);">-</span>
<span class="t" style="left:1574.8px;top:877.83px;height:20px;line-height:20px;font-size:16.45px;color:#111;transform-origin:center center;transform:translateX(-50%);">-</span>
<span class="t" style="left:1711.4px;top:877.83px;height:20px;line-height:20px;font-size:16.45px;color:#111;transform-origin:center center;transform:translateX(-50%);">-</span>
<span class="t" style="left:1848.0px;top:877.83px;height:20px;line-height:20px;font-size:16.45px;color:#111;transform-origin:center center;transform:translateX(-50%);">-</span>
<span class="t" style="left:1981.0px;top:878.13px;height:20px;line-height:20px;font-size:16.45px;color:#111;transform-origin:center center;transform:translateX(-50%);">715</span>
<span class="t" style="left:105.6px;top:899.30px;height:20px;line-height:20px;font-size:16.45px;color:#111;transform-origin:left center;">Invested on 2029E</span>
<span class="t" style="left:777.4px;top:899.30px;height:20px;line-height:20px;font-size:16.45px;color:#111;transform-origin:center center;transform:translateX(-50%);">R$ 000s</span>
<span class="t" style="left:863.4px;top:899.30px;height:20px;line-height:20px;font-size:16.45px;color:#111;transform-origin:center center;transform:translateX(-50%);">8,579</span>
<span class="t" style="left:1165.0px;top:899.00px;height:20px;line-height:20px;font-size:16.45px;color:#111;transform-origin:center center;transform:translateX(-50%);">-</span>
<span class="t" style="left:1301.6px;top:899.00px;height:20px;line-height:20px;font-size:16.45px;color:#111;transform-origin:center center;transform:translateX(-50%);">-</span>
<span class="t" style="left:1438.2px;top:899.00px;height:20px;line-height:20px;font-size:16.45px;color:#111;transform-origin:center center;transform:translateX(-50%);">-</span>
<span class="t" style="left:1574.8px;top:899.00px;height:20px;line-height:20px;font-size:16.45px;color:#111;transform-origin:center center;transform:translateX(-50%);">-</span>
<span class="t" style="left:1711.4px;top:899.00px;height:20px;line-height:20px;font-size:16.45px;color:#111;transform-origin:center center;transform:translateX(-50%);">-</span>
<span class="t" style="left:1848.0px;top:899.00px;height:20px;line-height:20px;font-size:16.45px;color:#111;transform-origin:center center;transform:translateX(-50%);">-</span>
<span class="t" style="left:1984.6px;top:899.00px;height:20px;line-height:20px;font-size:16.45px;color:#111;transform-origin:center center;transform:translateX(-50%);">-</span>
<span class="t" style="left:105.6px;top:920.47px;height:20px;line-height:20px;font-size:16.45px;color:#111;transform-origin:left center;">Invested on 2030E</span>
<span class="t" style="left:777.4px;top:920.47px;height:20px;line-height:20px;font-size:16.45px;color:#111;transform-origin:center center;transform:translateX(-50%);">R$ 000s</span>
<span class="t" style="left:863.4px;top:920.47px;height:20px;line-height:20px;font-size:16.45px;color:#111;transform-origin:center center;transform:translateX(-50%);">8,579</span>
<span class="t" style="left:1165.0px;top:920.17px;height:20px;line-height:20px;font-size:16.45px;color:#111;transform-origin:center center;transform:translateX(-50%);">-</span>
<span class="t" style="left:1301.6px;top:920.17px;height:20px;line-height:20px;font-size:16.45px;color:#111;transform-origin:center center;transform:translateX(-50%);">-</span>
<span class="t" style="left:1438.2px;top:920.17px;height:20px;line-height:20px;font-size:16.45px;color:#111;transform-origin:center center;transform:translateX(-50%);">-</span>
<span class="t" style="left:1574.8px;top:920.17px;height:20px;line-height:20px;font-size:16.45px;color:#111;transform-origin:center center;transform:translateX(-50%);">-</span>
<span class="t" style="left:1711.4px;top:920.17px;height:20px;line-height:20px;font-size:16.45px;color:#111;transform-origin:center center;transform:translateX(-50%);">-</span>
<span class="t" style="left:1848.0px;top:920.17px;height:20px;line-height:20px;font-size:16.45px;color:#111;transform-origin:center center;transform:translateX(-50%);">-</span>
<span class="t" style="left:1984.6px;top:920.17px;height:20px;line-height:20px;font-size:16.45px;color:#111;transform-origin:center center;transform:translateX(-50%);">-</span>
<span class="t" style="left:105.6px;top:941.64px;height:20px;line-height:20px;font-size:16.45px;color:#111;transform-origin:left center;">Invested on 2031E</span>
<span class="t" style="left:777.4px;top:941.64px;height:20px;line-height:20px;font-size:16.45px;color:#111;transform-origin:center center;transform:translateX(-50%);">R$ 000s</span>
<span class="t" style="left:863.4px;top:941.64px;height:20px;line-height:20px;font-size:16.45px;color:#111;transform-origin:center center;transform:translateX(-50%);">8,579</span>
<span class="t" style="left:1165.0px;top:941.34px;height:20px;line-height:20px;font-size:16.45px;color:#111;transform-origin:center center;transform:translateX(-50%);">-</span>
<span class="t" style="left:1301.6px;top:941.34px;height:20px;line-height:20px;font-size:16.45px;color:#111;transform-origin:center center;transform:translateX(-50%);">-</span>
<span class="t" style="left:1438.2px;top:941.34px;height:20px;line-height:20px;font-size:16.45px;color:#111;transform-origin:center center;transform:translateX(-50%);">-</span>
<span class="t" style="left:1574.8px;top:941.34px;height:20px;line-height:20px;font-size:16.45px;color:#111;transform-origin:center center;transform:translateX(-50%);">-</span>
<span class="t" style="left:1711.4px;top:941.34px;height:20px;line-height:20px;font-size:16.45px;color:#111;transform-origin:center center;transform:translateX(-50%);">-</span>
<span class="t" style="left:1848.0px;top:941.34px;height:20px;line-height:20px;font-size:16.45px;color:#111;transform-origin:center center;transform:translateX(-50%);">-</span>
<span class="t" style="left:1984.6px;top:941.34px;height:20px;line-height:20px;font-size:16.45px;color:#111;transform-origin:center center;transform:translateX(-50%);">-</span>
<span class="t" style="left:105.6px;top:962.81px;height:20px;line-height:20px;font-size:16.45px;color:#111;transform-origin:left center;">Invested on 2032E</span>
<span class="t" style="left:777.4px;top:962.81px;height:20px;line-height:20px;font-size:16.45px;color:#111;transform-origin:center center;transform:translateX(-50%);">R$ 000s</span>
<span class="t" style="left:863.4px;top:962.81px;height:20px;line-height:20px;font-size:16.45px;color:#111;transform-origin:center center;transform:translateX(-50%);">8,579</span>
<span class="t" style="left:1165.0px;top:962.51px;height:20px;line-height:20px;font-size:16.45px;color:#111;transform-origin:center center;transform:translateX(-50%);">-</span>
<span class="t" style="left:1301.6px;top:962.51px;height:20px;line-height:20px;font-size:16.45px;color:#111;transform-origin:center center;transform:translateX(-50%);">-</span>
<span class="t" style="left:1438.2px;top:962.51px;height:20px;line-height:20px;font-size:16.45px;color:#111;transform-origin:center center;transform:translateX(-50%);">-</span>
<span class="t" style="left:1574.8px;top:962.51px;height:20px;line-height:20px;font-size:16.45px;color:#111;transform-origin:center center;transform:translateX(-50%);">-</span>
<span class="t" style="left:1711.4px;top:962.51px;height:20px;line-height:20px;font-size:16.45px;color:#111;transform-origin:center center;transform:translateX(-50%);">-</span>
<span class="t" style="left:1848.0px;top:962.51px;height:20px;line-height:20px;font-size:16.45px;color:#111;transform-origin:center center;transform:translateX(-50%);">-</span>
<span class="t" style="left:1984.6px;top:962.51px;height:20px;line-height:20px;font-size:16.45px;color:#111;transform-origin:center center;transform:translateX(-50%);">-</span>
<span class="t" style="left:105.6px;top:983.98px;height:20px;line-height:20px;font-size:16.45px;color:#111;transform-origin:left center;">Invested on 2033E</span>
<span class="t" style="left:777.4px;top:983.98px;height:20px;line-height:20px;font-size:16.45px;color:#111;transform-origin:center center;transform:translateX(-50%);">R$ 000s</span>
<span class="t" style="left:863.4px;top:983.98px;height:20px;line-height:20px;font-size:16.45px;color:#111;transform-origin:center center;transform:translateX(-50%);">8,579</span>
<span class="t" style="left:1165.0px;top:983.68px;height:20px;line-height:20px;font-size:16.45px;color:#111;transform-origin:center center;transform:translateX(-50%);">-</span>
<span class="t" style="left:1301.6px;top:983.68px;height:20px;line-height:20px;font-size:16.45px;color:#111;transform-origin:center center;transform:translateX(-50%);">-</span>
<span class="t" style="left:1438.2px;top:983.68px;height:20px;line-height:20px;font-size:16.45px;color:#111;transform-origin:center center;transform:translateX(-50%);">-</span>
<span class="t" style="left:1574.8px;top:983.68px;height:20px;line-height:20px;font-size:16.45px;color:#111;transform-origin:center center;transform:translateX(-50%);">-</span>
<span class="t" style="left:1711.4px;top:983.68px;height:20px;line-height:20px;font-size:16.45px;color:#111;transform-origin:center center;transform:translateX(-50%);">-</span>
<span class="t" style="left:1848.0px;top:983.68px;height:20px;line-height:20px;font-size:16.45px;color:#111;transform-origin:center center;transform:translateX(-50%);">-</span>
<span class="t" style="left:1984.6px;top:983.68px;height:20px;line-height:20px;font-size:16.45px;color:#111;transform-origin:center center;transform:translateX(-50%);">-</span>
<span class="t" style="left:777.4px;top:1001.95px;height:20px;line-height:20px;font-size:16.45px;color:#111;transform-origin:center center;transform:translateX(-50%);">R$ 000s</span>
<span class="t" style="left:863.4px;top:1001.95px;height:20px;line-height:20px;font-size:16.45px;color:#111;transform-origin:center center;transform:translateX(-50%);">8,579</span>
<span class="t" style="left:1165.0px;top:1001.65px;height:20px;line-height:20px;font-size:16.45px;color:#111;transform-origin:center center;transform:translateX(-50%);">-</span>
<span class="t" style="left:1301.6px;top:1001.65px;height:20px;line-height:20px;font-size:16.45px;color:#111;transform-origin:center center;transform:translateX(-50%);">-</span>
<span class="t" style="left:1438.2px;top:1001.65px;height:20px;line-height:20px;font-size:16.45px;color:#111;transform-origin:center center;transform:translateX(-50%);">-</span>
<span class="t" style="left:1574.8px;top:1001.65px;height:20px;line-height:20px;font-size:16.45px;color:#111;transform-origin:center center;transform:translateX(-50%);">-</span>
<span class="t" style="left:1711.4px;top:1001.65px;height:20px;line-height:20px;font-size:16.45px;color:#111;transform-origin:center center;transform:translateX(-50%);">-</span>
<span class="t" style="left:1848.0px;top:1001.65px;height:20px;line-height:20px;font-size:16.45px;color:#111;transform-origin:center center;transform:translateX(-50%);">-</span>
<span class="t" style="left:1984.6px;top:1001.65px;height:20px;line-height:20px;font-size:16.45px;color:#111;transform-origin:center center;transform:translateX(-50%);">-</span>
</div></div>
<div class="a" style="left:819.3px;top:285.6px;width:1px;height:723px;background:#9c9c9c;"></div>
<div class="a" style="left:0px;top:474.4px;width:2005.3px;height:1.1px;background:#9a9a9a;"></div>
<div class="a" style="left:1094.1px;top:579px;width:140.2px;height:24.6px;border:2px solid #24704a;"></div>
<div class="a" style="left:1229px;top:598.6px;width:6.8px;height:6.8px;background:#24704a;border:1px solid #fff;"></div>
<div class="a" style="left:8.5px;top:475px;width:1.4px;height:43px;background:#8c8c8c;"></div>
<div class="a" style="left:2.2px;top:518px;width:19.6px;height:19.6px;background:#e4e4e4;border:1px solid #a0a0a0;"></div>
<div class="a" style="left:8px;top:527px;width:8.2px;height:2px;background:#444;"></div>
<div class="a" style="left:8.5px;top:561.6px;width:1.4px;height:447px;background:#8c8c8c;"></div>
<div class="a" style="left:8.5px;top:561.6px;width:5.6px;height:1.4px;background:#8c8c8c;"></div>
<div class="a" style="left:28px;top:486.5px;width:1.8px;height:1.8px;background:#a8a8a8;border-radius:1px;"></div>
<div class="a" style="left:28px;top:507.67px;width:1.8px;height:1.8px;background:#a8a8a8;border-radius:1px;"></div>
<div class="a" style="left:28px;top:571.18px;width:1.8px;height:1.8px;background:#a8a8a8;border-radius:1px;"></div>
<div class="a" style="left:28px;top:592.35px;width:1.8px;height:1.8px;background:#a8a8a8;border-radius:1px;"></div>
<div class="a" style="left:28px;top:613.52px;width:1.8px;height:1.8px;background:#a8a8a8;border-radius:1px;"></div>
<div class="a" style="left:28px;top:634.6899999999999px;width:1.8px;height:1.8px;background:#a8a8a8;border-radius:1px;"></div>
<div class="a" style="left:28px;top:655.86px;width:1.8px;height:1.8px;background:#a8a8a8;border-radius:1px;"></div>
<div class="a" style="left:28px;top:677.0300000000001px;width:1.8px;height:1.8px;background:#a8a8a8;border-radius:1px;"></div>
<div class="a" style="left:28px;top:698.2px;width:1.8px;height:1.8px;background:#a8a8a8;border-radius:1px;"></div>
<div class="a" style="left:28px;top:719.37px;width:1.8px;height:1.8px;background:#a8a8a8;border-radius:1px;"></div>
<div class="a" style="left:28px;top:740.5400000000001px;width:1.8px;height:1.8px;background:#a8a8a8;border-radius:1px;"></div>
<div class="a" style="left:28px;top:761.71px;width:1.8px;height:1.8px;background:#a8a8a8;border-radius:1px;"></div>
<div class="a" style="left:28px;top:782.88px;width:1.8px;height:1.8px;background:#a8a8a8;border-radius:1px;"></div>
<div class="a" style="left:28px;top:804.0500000000001px;width:1.8px;height:1.8px;background:#a8a8a8;border-radius:1px;"></div>
<div class="a" style="left:28px;top:825.22px;width:1.8px;height:1.8px;background:#a8a8a8;border-radius:1px;"></div>
<div class="a" style="left:28px;top:846.39px;width:1.8px;height:1.8px;background:#a8a8a8;border-radius:1px;"></div>
<div class="a" style="left:28px;top:867.5600000000001px;width:1.8px;height:1.8px;background:#a8a8a8;border-radius:1px;"></div>
<div class="a" style="left:28px;top:888.73px;width:1.8px;height:1.8px;background:#a8a8a8;border-radius:1px;"></div>
<div class="a" style="left:28px;top:909.9px;width:1.8px;height:1.8px;background:#a8a8a8;border-radius:1px;"></div>
<div class="a" style="left:28px;top:931.07px;width:1.8px;height:1.8px;background:#a8a8a8;border-radius:1px;"></div>
<div class="a" style="left:28px;top:952.24px;width:1.8px;height:1.8px;background:#a8a8a8;border-radius:1px;"></div>
<div class="a" style="left:28px;top:973.41px;width:1.8px;height:1.8px;background:#a8a8a8;border-radius:1px;"></div>
<div class="a" style="left:28px;top:994.58px;width:1.8px;height:1.8px;background:#a8a8a8;border-radius:1px;"></div>
<div class="a" style="left:2005.3px;top:286px;width:26.700000000000045px;height:722.5px;background:#f0f0f3;"></div>
<svg class="a" style="left:2011.5px;top:292px;" width="13" height="9" viewBox="0 0 13 9"><path d="M6.5 1 L12.4 8 H0.6 Z" fill="#5f5f5f"/></svg>
<svg class="a" style="left:2011.5px;top:995px;" width="13" height="9" viewBox="0 0 13 9"><path d="M6.5 8 L12.4 1 H0.6 Z" fill="#5f5f5f"/></svg>
<div class="a" style="left:2013px;top:672px;width:11.4px;height:22.6px;background:#6f6f6f;border-radius:5px;"></div>
<div class="a" style="left:0px;top:1008.8px;width:2032px;height:41.6px;background:linear-gradient(90deg,#efe9e0 0%,#efe9e0 60%,#f0ebe3 100%);"></div>
<div class="a" style="left:0px;top:1050.2px;width:2032px;height:30px;background:#f3f3f3;"></div>
<svg class="a" style="left:32px;top:1022px;" width="10" height="15" viewBox="0 0 10 15"><path d="M8.6 1.2 L1.6 7.4 L8.6 13.6" fill="none" stroke="#a3a09c" stroke-width="1.5" stroke-linecap="round" stroke-linejoin="round"/></svg>
<svg class="a" style="left:76px;top:1022px;" width="10" height="15" viewBox="0 0 10 15"><path d="M1.4 1.2 L8.4 7.4 L1.4 13.6" fill="none" stroke="#a3a09c" stroke-width="1.5" stroke-linecap="round" stroke-linejoin="round"/></svg>
<div class="a" style="left:383.2px;top:1006px;width:75.2px;height:38.4px;background:linear-gradient(180deg,#ffffff 0%,#fafcfd 12%,#dde6ec 45%,#c2d2dc 72%,#a8becd 100%);border-radius:0 0 7px 7px;"></div>
<span class="t" style="left:162.4px;top:1018.60px;height:24px;line-height:24px;font-size:18.4px;color:#2b2b2b;transform-origin:left center;transform:scaleX(0.9808);">Control Panel</span>
<span class="t" style="left:308.7px;top:1018.60px;height:24px;line-height:24px;font-size:18.4px;color:#2b2b2b;transform-origin:left center;transform:scaleX(0.9900);">Macro</span>
<span class="t" style="left:393px;top:1014.60px;height:24px;line-height:24px;font-size:18.4px;color:#1f1f1f;transform-origin:left center;transform:scaleX(0.9227);-webkit-text-stroke:0.5px #1f1f1f;">Asset 1</span>
<div class="a" style="left:392.4px;top:1040.3px;width:57.4px;height:2.5px;background:#27875c;border-radius:1px;"></div>
<span class="t" style="left:482px;top:1018.60px;height:24px;line-height:24px;font-size:18.4px;color:#2b2b2b;transform-origin:left center;transform:scaleX(0.9366);">Sheet1</span>
<span class="t" style="left:571px;top:1018.60px;height:24px;line-height:24px;font-size:18.4px;color:#2b2b2b;transform-origin:left center;transform:scaleX(0.9650);">QuickCel</span>
<div class="a" style="left:290.2px;top:1016px;width:1px;height:28px;background:#ddd6ce;"></div>
<div class="a" style="left:375.4px;top:1016px;width:1px;height:28px;background:#ddd6ce;"></div>
<div class="a" style="left:466px;top:1016px;width:1px;height:28px;background:#ddd6ce;"></div>
<div class="a" style="left:553.2px;top:1016px;width:1px;height:28px;background:#ddd6ce;"></div>
<div class="a" style="left:660px;top:1016px;width:1px;height:28px;background:#ddd6ce;"></div>
<svg class="a" style="left:716.5px;top:1022.3px;" width="15" height="15" viewBox="0 0 15 15"><path d="M7.5 0.8 V14.2 M0.8 7.5 H14.2" stroke="#2b2b2b" stroke-width="1.5" stroke-linecap="round"/></svg>
<div class="a" style="left:1221.6px;top:1024.2px;width:3.4px;height:3.2px;background:#3a2f28;"></div>
<div class="a" style="left:1221.6px;top:1029.4px;width:3.4px;height:3.2px;background:#3a2f28;"></div>
<div class="a" style="left:1221.6px;top:1034.6px;width:3.4px;height:3.2px;background:#3a2f28;"></div>
<div class="a" style="left:1245px;top:1018.8px;width:770px;height:20.6px;background:#f4f3f2;border-radius:10px;"></div>
<svg class="a" style="left:1251px;top:1024px;" width="10" height="12" viewBox="0 0 10 12"><path d="M9.4 0.6 V11.2 L0.6 5.9 Z" fill="#6e6e6e" stroke="#6e6e6e" stroke-width="0.8" stroke-linejoin="round"/></svg>
<svg class="a" style="left:1990.4px;top:1024px;" width="10" height="12" viewBox="0 0 10 12"><path d="M0.6 0.6 V11.2 L9.4 5.9 Z" fill="#6e6e6e" stroke="#6e6e6e" stroke-width="0.8" stroke-linejoin="round"/></svg>
<div class="a" style="left:1267px;top:1024px;width:164px;height:11.6px;background:#716f6f;border-radius:6px;"></div>
<span class="t" style="left:15.4px;top:1058.10px;height:17px;line-height:17px;font-size:13.4px;color:#3b3b3b;transform-origin:left center;transform:scaleX(0.9659);">Ready</span>
<span class="t" style="left:75.4px;top:1058.10px;height:17px;line-height:17px;font-size:13.4px;color:#3b3b3b;transform-origin:left center;transform:scaleX(0.9673);">Calculate</span>
<svg class="a" style="left:157px;top:1057.6px;" width="19" height="18" viewBox="0 0 19 18"><rect x="0.8" y="0.8" width="17.2" height="15.6" rx="1" fill="none" stroke="#444" stroke-width="1.3"/><path d="M0.8 4 H18" stroke="#444" stroke-width="1.3"/>
<path d="M3.2 7.6 H6.6 M3.2 10.4 H6.6 M3.2 13.2 H6.6" stroke="#444" stroke-width="1.2"/>
<circle cx="12.6" cy="11.4" r="4.4" fill="#f3f3f3" stroke="#444" stroke-width="1.3"/><circle cx="12.6" cy="11.4" r="2" fill="#444"/></svg>
<svg class="a" style="left:199.5px;top:1056.8px;" width="20" height="20" viewBox="0 0 20 20"><circle cx="9" cy="3" r="1.9" fill="none" stroke="#3b3b3b" stroke-width="1.2"/>
<path d="M1.4 6.4 L6.6 8 L5 17.6 L9 11.6 L10.6 14 M16.6 6.4 L11.4 8 L11.8 10.8" fill="none" stroke="#3b3b3b" stroke-width="1.3" stroke-linecap="round" stroke-linejoin="round"/>
<path d="M11.6 12.4 L18 18.8 M18 12.4 L11.6 18.8" stroke="#3b3b3b" stroke-width="1.3" stroke-linecap="round"/></svg>
<span class="t" style="left:223.4px;top:1058.10px;height:17px;line-height:17px;font-size:13.4px;color:#2b2b2b;font-weight:700;transform-origin:left center;">Accessibility: Investigate</span>
<div class="a" style="left:1638.8px;top:1052.6px;width:50.4px;height:28px;background:#dedede;"></div>
<svg class="a" style="left:1654px;top:1057px;" width="18" height="18" viewBox="0 0 18 18"><rect x="1" y="1" width="16" height="16" fill="none" stroke="#444" stroke-width="1.5"/><path d="M6.4 1 V17 M11.6 1 V17 M1 6.4 H17 M1 11.6 H17" stroke="#444" stroke-width="1.4"/></svg>
<svg class="a" style="left:1707.4px;top:1057px;" width="19" height="18" viewBox="0 0 19 18"><rect x="0.8" y="0.8" width="17.2" height="16.2" fill="none" stroke="#444" stroke-width="1.4"/><rect x="4.8" y="4" width="9.2" height="10" fill="none" stroke="#444" stroke-width="1.2"/><path d="M6.8 7 H12 M6.8 9.2 H12 M6.8 11.4 H12" stroke="#444" stroke-width="1"/></svg>
<svg class="a" style="left:1760px;top:1057px;" width="19" height="18" viewBox="0 0 19 18"><rect x="0.8" y="0.8" width="17.2" height="16.2" fill="none" stroke="#444" stroke-width="1.4"/><path d="M0.8 9.4 H11.6 V0.8 M6.2 0.8 V9.4" fill="none" stroke="#444" stroke-width="1.3"/></svg>
<div class="a" style="left:1804px;top:1065px;width:9px;height:1.4px;background:#444;"></div>
<div class="a" style="left:1821px;top:1066px;width:132px;height:1.2px;background:#7a7a7a;"></div>
<div class="a" style="left:1870px;top:1058.6px;width:7px;height:15.4px;background:#5a5a5a;border-radius:1px;"></div>
<div class="a" style="left:1886px;top:1063px;width:1.2px;height:7.4px;background:#555;"></div>
<svg class="a" style="left:1959px;top:1060.6px;" width="11" height="11" viewBox="0 0 11 11"><path d="M5.5 0.4 V10.6 M0.4 5.5 H10.6" stroke="#444" stroke-width="1.3"/></svg>
<span class="t" style="left:1986.9px;top:1058.10px;height:17px;line-height:17px;font-size:13.4px;color:#3b3b3b;transform-origin:left center;transform:scaleX(0.9473);">80%</span>
<svg class="a" style="left:283px;top:270px;" width="15" height="21" viewBox="0 0 15 21"><path d="M1 1 V16.4 L4.8 12.8 L7.6 19.4 L10.2 18.2 L7.4 11.8 H12.6 Z" fill="#fff" stroke="#222" stroke-width="1.1" stroke-linejoin="round"/></svg>
</body></html>
